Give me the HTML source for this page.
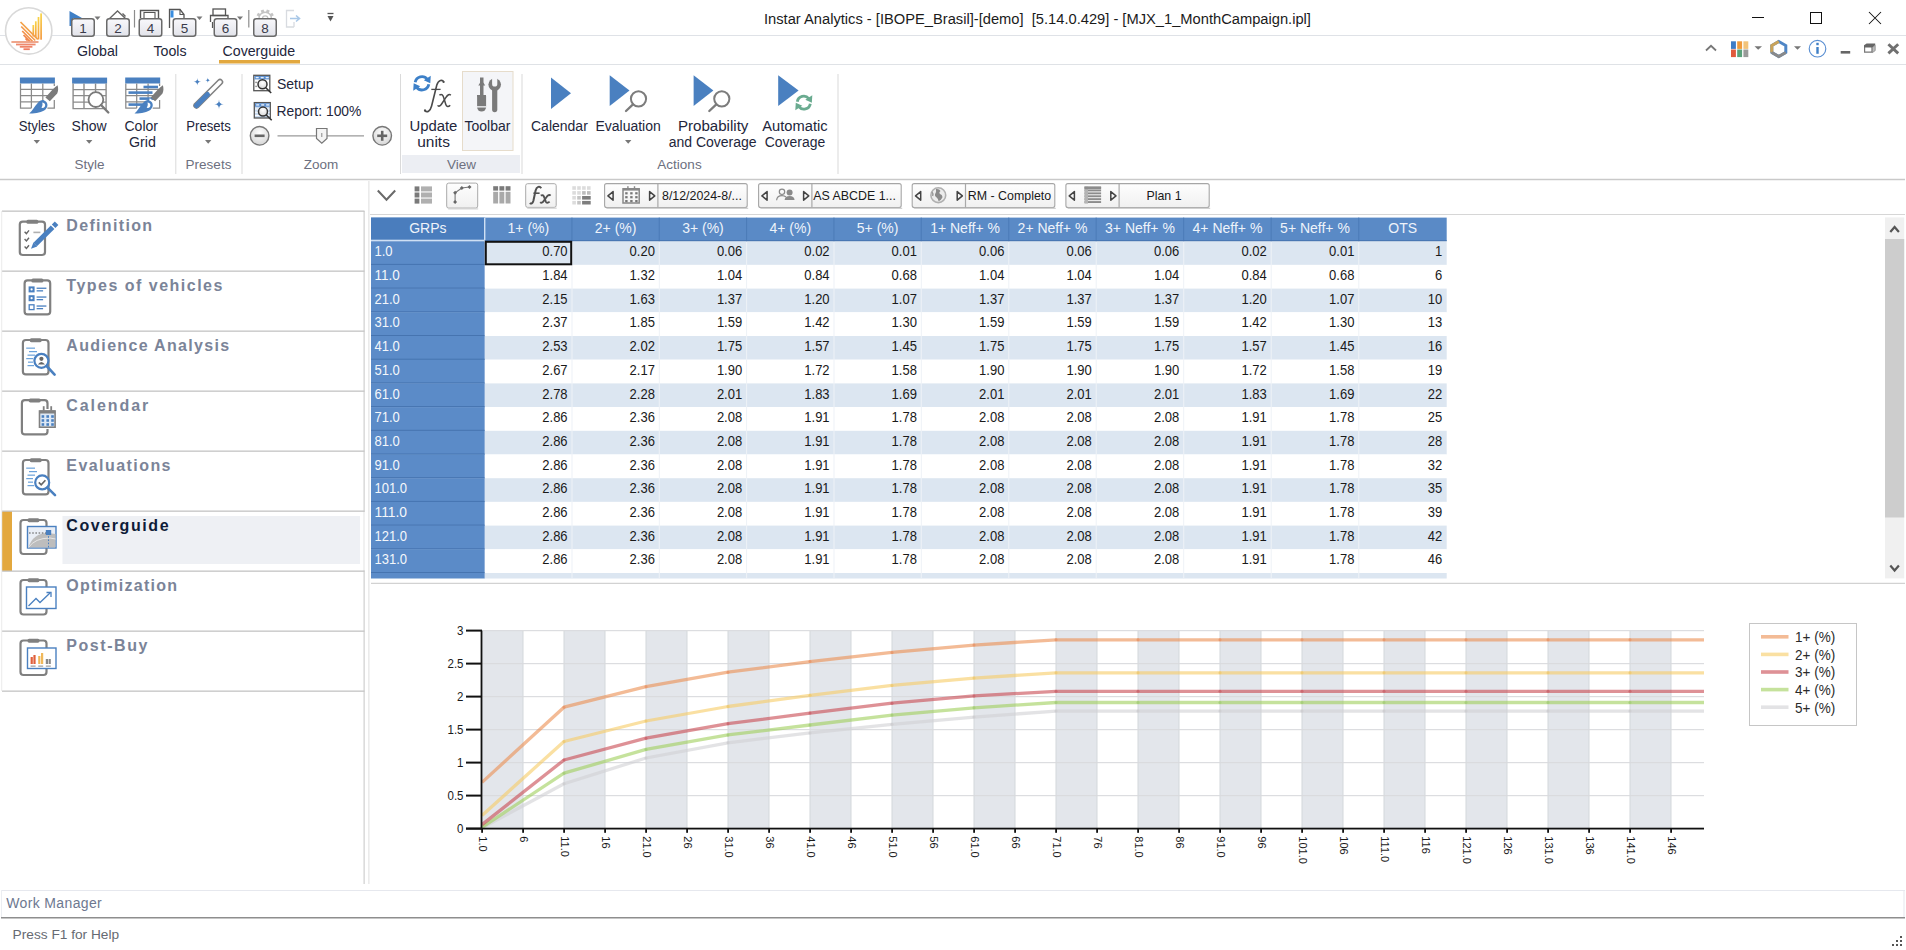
<!DOCTYPE html>
<html><head><meta charset="utf-8"><title>Instar Analytics</title>
<style>
*{margin:0;padding:0;box-sizing:border-box}
html,body{width:1906px;height:950px;overflow:hidden;background:#fff}
body{position:relative;font-family:"Liberation Sans",sans-serif;color:#222}
.a{position:absolute}
.t{position:absolute;white-space:nowrap;line-height:1}
.rl{position:absolute;white-space:nowrap;line-height:1;font-size:14px;color:#262a40}
.gl{position:absolute;white-space:nowrap;line-height:1;font-size:13.5px;color:#6e7180}
.sep{position:absolute;width:1px;background:#d6d6d6}
.badge{position:absolute;width:24px;height:19px;border:1.5px solid #6a6a6a;border-radius:3px;background:linear-gradient(#f7f7fa,#e4e5ec);font-size:14px;line-height:16px;text-align:center;color:#3a3a4a}
.dd{position:absolute;width:0;height:0;border-left:3.5px solid transparent;border-right:3.5px solid transparent;border-top:4px solid #6b6b6b}
.nav{position:absolute;left:2px;width:363px;height:61px;border-top:1.5px solid #c4c4c4;border-right:1px solid #c8c8c8}
.nl{position:absolute;left:66px;top:7px;font-size:16px;font-weight:bold;letter-spacing:1.3px;color:#7b8498;white-space:nowrap;line-height:1}
.cmb{position:absolute;height:24px;border:1px solid #c6c6c6;border-radius:2px;background:linear-gradient(#fdfdfd,#f1f1f1);box-shadow:1px 1px 1px #d8d8d8}
.cell{position:absolute;font-size:13px;line-height:1;white-space:nowrap;color:#1a1a1a}
</style></head><body>
<svg width="1906" height="950" viewBox="0 0 1906 950" style="position:absolute;left:0;top:0;font-family:'Liberation Sans',sans-serif"><defs>
<linearGradient id="bg1" x1="0" y1="0" x2="0" y2="1"><stop offset="0" stop-color="#f8f8fb"/><stop offset="1" stop-color="#e2e3ea"/></linearGradient>
<linearGradient id="btn" x1="0" y1="0" x2="0" y2="1"><stop offset="0" stop-color="#fefefe"/><stop offset="1" stop-color="#f0f0f0"/></linearGradient>
<radialGradient id="zc" cx="0.5" cy="0.35" r="0.6"><stop offset="0" stop-color="#ffffff"/><stop offset="1" stop-color="#d9d9d9"/></radialGradient>
</defs><line x1="0" y1="35.5" x2="1906" y2="35.5" stroke="#dfe2e7" stroke-width="1" />
<circle cx="28.7" cy="30.9" r="23.2" fill="#fff" stroke="#d9d9d9" stroke-width="1.6"/>
<linearGradient id="lg1" x1="0" y1="0" x2="0" y2="1"><stop offset="0" stop-color="#f8d23c"/><stop offset="1" stop-color="#f39236"/></linearGradient>
<rect x="40.25" y="13.4" width="1.7" height="26.300000000000004" fill="url(#lg1)" opacity="0.95"/>
<rect x="37.65" y="17" width="1.7" height="22.5" fill="url(#lg1)" opacity="0.95"/>
<rect x="34.949999999999996" y="21.3" width="1.7" height="16.7" fill="url(#lg1)" opacity="0.95"/>
<rect x="32.449999999999996" y="25" width="1.7" height="11.5" fill="url(#lg1)" opacity="0.95"/>
<line x1="20.5" y1="22" x2="37.8" y2="39.3" stroke="#f4a24a" stroke-width="1.7" />
<line x1="21.2" y1="26.5" x2="35.2" y2="40.5" stroke="#f39a4a" stroke-width="1.7" />
<line x1="22.2" y1="31" x2="32.5" y2="41.3" stroke="#f2924c" stroke-width="1.7" />
<line x1="23.5" y1="35" x2="29.8" y2="41.3" stroke="#f18a4e" stroke-width="1.7" />
<line x1="25.5" y1="38.5" x2="27.6" y2="40.6" stroke="#f08450" stroke-width="1.7" />
<line x1="11.4" y1="42" x2="38.5" y2="42" stroke="#ee9c7e" stroke-width="1.8" />
<line x1="16" y1="44.5" x2="35.6" y2="44.5" stroke="#ee8a6e" stroke-width="1.8" />
<line x1="19.8" y1="46.8" x2="32.4" y2="46.8" stroke="#ef8468" stroke-width="1.8" />
<line x1="23.5" y1="49.2" x2="29.8" y2="49.2" stroke="#ef7d62" stroke-width="1.8" />
<path d="M69.5 11 L82 18 L73 18 L73 26 L69.5 26 Z" fill="#3f7fc6"/>
<path d="M108 20 L117.5 11 L126 19" fill="none" stroke="#666" stroke-width="1.3"/>
<path d="M122.5 13.5 l3 3" stroke="#666" stroke-width="1.5"/>
<line x1="134.5" y1="10" x2="134.5" y2="27.5" stroke="#8c8c8c" stroke-width="1.2" />
<path d="M140.5 18 V10.5 H158.5 V18" fill="none" stroke="#555" stroke-width="1.4"/>
<path d="M144 18 V12.5 H155 V18" fill="none" stroke="#555" stroke-width="1.1"/>
<path d="M169.5 28 V9.5 H180 L184 14.5 V18" fill="none" stroke="#555" stroke-width="1.3"/>
<path d="M180 9.5 V14.5 H184" fill="none" stroke="#555" stroke-width="1.1"/>
<rect x="170.5" y="10.5" width="3" height="7" fill="#3a8ee0"/>
<path d="M210.5 22 V15.5 H228 V18" fill="none" stroke="#555" stroke-width="1.3"/>
<rect x="213" y="9" width="12.5" height="6.5" fill="none" stroke="#555" stroke-width="1.3"/>
<path d="M212.5 22 V28" stroke="#555" stroke-width="1.2"/>
<line x1="248.8" y1="10" x2="248.8" y2="27.5" stroke="#8c8c8c" stroke-width="1.2" />
<path d="M259 18.5 A6.2 6.2 0 0 1 271.4 18.5" fill="none" stroke="#c4c4c4" stroke-width="1.4"/>
<rect x="257.12" y="13.20" width="3" height="3" fill="#c4c4c4" transform="rotate(-60 258.62 14.70)"/>
<rect x="261.10" y="9.86" width="3" height="3" fill="#c4c4c4" transform="rotate(-20 262.60 11.36)"/>
<rect x="266.30" y="9.86" width="3" height="3" fill="#c4c4c4" transform="rotate(20 267.80 11.36)"/>
<rect x="270.28" y="13.20" width="3" height="3" fill="#c4c4c4" transform="rotate(60 271.78 14.70)"/>
<path d="M262.5 18.5 A2.7 2.7 0 0 1 267.9 18.5" fill="none" stroke="#c4c4c4" stroke-width="1.3"/>
<path d="M294 10.5 H286.5 V27 H294 M294 22 V27" fill="none" stroke="#d8dbe0" stroke-width="1.3"/>
<path d="M290 18.5 H299 M296 15.5 L299.5 18.5 L296 21.5" fill="none" stroke="#a9c8e8" stroke-width="1.6"/>
<path d="M327.5 13.5 H333.5" stroke="#555" stroke-width="1.3"/>
<path d="M327.5 16 H333.5 L330.5 21.5 Z" fill="#555"/>
<rect x="71.75" y="18.75" width="22.5" height="17.5" rx="2.5" fill="url(#bg1)" stroke="#6a6a6a" stroke-width="1.5"/>
<text x="83" y="33" font-size="13.5" fill="#3a3b4a" text-anchor="middle" font-weight="normal" >1</text>
<rect x="106.75" y="18.75" width="22.5" height="17.5" rx="2.5" fill="url(#bg1)" stroke="#6a6a6a" stroke-width="1.5"/>
<text x="118" y="33" font-size="13.5" fill="#3a3b4a" text-anchor="middle" font-weight="normal" >2</text>
<rect x="139.25" y="18.75" width="22.5" height="17.5" rx="2.5" fill="url(#bg1)" stroke="#6a6a6a" stroke-width="1.5"/>
<text x="150.5" y="33" font-size="13.5" fill="#3a3b4a" text-anchor="middle" font-weight="normal" >4</text>
<rect x="173.25" y="18.75" width="22.5" height="17.5" rx="2.5" fill="url(#bg1)" stroke="#6a6a6a" stroke-width="1.5"/>
<text x="184.5" y="33" font-size="13.5" fill="#3a3b4a" text-anchor="middle" font-weight="normal" >5</text>
<rect x="214.25" y="18.75" width="22.5" height="17.5" rx="2.5" fill="url(#bg1)" stroke="#6a6a6a" stroke-width="1.5"/>
<text x="225.5" y="33" font-size="13.5" fill="#3a3b4a" text-anchor="middle" font-weight="normal" >6</text>
<rect x="253.75" y="18.75" width="22.5" height="17.5" rx="2.5" fill="url(#bg1)" stroke="#6a6a6a" stroke-width="1.5"/>
<text x="265" y="33" font-size="13.5" fill="#3a3b4a" text-anchor="middle" font-weight="normal" >8</text>
<path d="M94.5 16.5 H100.5 L97.5 20 Z" fill="#777"/>
<path d="M196.5 16.5 H202.5 L199.5 20 Z" fill="#777"/>
<path d="M237 16.5 H243 L240 20 Z" fill="#777"/>
<text x="764" y="24" font-size="14.7" fill="#1b1b1b" text-anchor="start" font-weight="normal" id="title" xml:space="preserve">Instar Analytics - [IBOPE_Brasil]-[demo]  [5.14.0.429] - [MJX_1_MonthCampaign.ipl]</text>
<line x1="1752" y1="17.5" x2="1764" y2="17.5" stroke="#111" stroke-width="1" />
<rect x="1810.5" y="12.5" width="11" height="11" fill="none" stroke="#111" stroke-width="1"/>
<path d="M1869 12 L1881 24 M1881 12 L1869 24" stroke="#111" stroke-width="1.05"/>
<line x1="0" y1="64.5" x2="1906" y2="64.5" stroke="#dfe2e6" stroke-width="1" />
<text x="77" y="55.5" font-size="14.2" fill="#23263b" text-anchor="start" font-weight="normal" >Global</text>
<text x="153.5" y="55.5" font-size="14.2" fill="#23263b" text-anchor="start" font-weight="normal" >Tools</text>
<text x="222.5" y="55.5" font-size="14.2" fill="#23263b" text-anchor="start" font-weight="normal" id="tabcg">Coverguide</text>
<rect x="219" y="60" width="81" height="3.5" fill="#e2a83f" />
<path d="M1706 50.5 L1711 45.8 L1716 50.5" fill="none" stroke="#777" stroke-width="1.8"/>
<rect x="1731.0" y="41.3" width="4.9" height="7.6" fill="#3e7cc5" />
<rect x="1737.2" y="41.3" width="4.9" height="7.6" fill="#f09a3a" />
<rect x="1743.4" y="41.3" width="4.9" height="7.6" fill="#f2c37a" />
<rect x="1731.0" y="49.5" width="4.9" height="7.6" fill="#e05a3c" />
<rect x="1737.2" y="49.5" width="4.9" height="7.6" fill="#5aa27a" />
<rect x="1743.4" y="49.5" width="4.9" height="7.6" fill="#9a9a9a" />
<path d="M1754.5 46.2 H1762 L1758.2 49.8 Z" fill="#777"/>
<path d="M1778.8 41.5 L1785.8 45.5 L1785.8 52.5 L1778.8 56.5 L1771.8 52.5 L1771.8 45.5 Z" fill="none" stroke="#4f86c6" stroke-width="3"/>
<path d="M1771.8 52.5 L1771.8 45.5 L1778.8 41.5" fill="none" stroke="#c9a35a" stroke-width="3"/>
<path d="M1771.8 52.5 L1778.8 56.5 L1785.8 52.5" fill="none" stroke="#8a8a8a" stroke-width="3"/>
<path d="M1794 46.2 H1801 L1797.5 49.8 Z" fill="#777"/>
<circle cx="1817.5" cy="48.7" r="8.3" fill="none" stroke="#5a8fd2" stroke-width="1.15"/>
<rect x="1816.3" y="47" width="2.4" height="6.8" fill="#3f7fc6" />
<rect x="1816.3" y="42.8" width="2.4" height="2.4" fill="#3f7fc6" />
<rect x="1840.7" y="51" width="9.5" height="2.6" fill="#666" />
<path d="M1864.6 46.5 H1872 V52.2 H1864.6 Z" fill="#fff" stroke="#777" stroke-width="1.2"/>
<path d="M1864 47.6 V45.2 L1866.6 43.6 H1875.2 V45.2 L1872.4 47.6 Z" fill="#666"/>
<path d="M1872.4 47.6 L1875.2 45.2 V50.6 L1872.4 52.6 Z" fill="#bdbdbd" stroke="#888" stroke-width="0.8"/>
<path d="M1888.4 44.2 L1898.2 53.4 M1898.2 44.2 L1888.4 53.4" stroke="#707070" stroke-width="2.9"/>
<rect x="19.9" y="77.5" width="35" height="6" fill="#4a80c0" />
<path d="M20.5 83.5 V108 H31.5 M54.3 83.5 V86 M54.3 100 V108 H47.4 M31.4 83.5 V108 M42.8 83.5 V104 M20.5 89.3 H54 M20.5 95.5 H50 M20.5 101.8 H40" fill="none" stroke="#8a8a8a" stroke-width="1.25"/>
<path d="M 57.60,85.20 C 58.40,88.00 58.40,91.00 57.20,93.50 L 49.80,101.20 L 45.40,97.60 L 52.60,89.60 C 54.00,88.00 56.00,86.50 57.60,85.20 Z" fill="#7b7b7b"/>
<path d="M 44.20,98.80 L 49.00,102.80" stroke="#fff" stroke-width="1.3"/>
<path d="M 43.80,100.20 C 47.50,101.80 49.00,105.50 45.50,109.50 C 42.00,112.50 35.00,113.80 29.20,113.60 C 32.50,110.50 34.50,106.50 37.50,103.20 C 39.50,101.00 41.60,99.80 43.80,100.20 Z" fill="#4a80c0"/>
<path d="M 42.20,102.60 C 44.80,103.00 46.00,105.00 44.60,107.00 C 43.60,108.20 42.00,108.40 41.40,107.60 C 42.80,106.00 42.60,104.00 42.20,102.60 Z" fill="#fff"/>
<rect x="72.1" y="77.6" width="35" height="6" fill="#4a80c0" />
<path d="M73.1 83.6 V108.6 H106.1 V83.6 M84.0 83.6 V108.6 M95.55 83.6 V108.6 M73.1 89.6 H106.1 M73.1 95.6 H106.1 M73.1 102.1 H106.1" fill="none" stroke="#8c8c8c" stroke-width="1.4"/>
<circle cx="95.9" cy="99.6" r="7.4" fill="#fff" stroke="#7a7a7a" stroke-width="1.8"/>
<path d="M101 105 L108.3 112.5" stroke="#7a7a7a" stroke-width="2.4" stroke-linecap="round"/>
<rect x="125.2" y="77.5" width="35" height="6" fill="#4a80c0" />
<path d="M125.8 83.5 V108 H136.8 M159.6 83.5 V86 M159.6 100 V108 H152.7 M136.7 83.5 V108 M148.1 83.5 V104 M125.8 89.3 H159 M125.8 95.5 H155 M125.8 101.8 H145" fill="none" stroke="#8a8a8a" stroke-width="1.25"/>
<rect x="143.5" y="85.7" width="14.5" height="2.6" fill="#4a80c0" />
<rect x="128.5" y="91.3" width="24.0" height="2.6" fill="#4a80c0" />
<rect x="139.5" y="97.3" width="15.5" height="2.6" fill="#4a80c0" />
<rect x="128.5" y="103.3" width="17.5" height="2.6" fill="#4a80c0" />
<path d="M 162.90,85.20 C 163.70,88.00 163.70,91.00 162.50,93.50 L 155.10,101.20 L 150.70,97.60 L 157.90,89.60 C 159.30,88.00 161.30,86.50 162.90,85.20 Z" fill="#7b7b7b"/>
<path d="M 149.50,98.80 L 154.30,102.80" stroke="#fff" stroke-width="1.3"/>
<path d="M 149.10,100.20 C 152.80,101.80 154.30,105.50 150.80,109.50 C 147.30,112.50 140.30,113.80 134.50,113.60 C 137.80,110.50 139.80,106.50 142.80,103.20 C 144.80,101.00 146.90,99.80 149.10,100.20 Z" fill="#4a80c0"/>
<path d="M 147.50,102.60 C 150.10,103.00 151.30,105.00 149.90,107.00 C 148.90,108.20 147.30,108.40 146.70,107.60 C 148.10,106.00 147.90,104.00 147.50,102.60 Z" fill="#fff"/>
<text x="18.8" y="131" font-size="14" fill="#23263b" text-anchor="start" font-weight="normal"  textLength="36" lengthAdjust="spacingAndGlyphs">Styles</text>
<text x="71.6" y="131" font-size="14" fill="#23263b" text-anchor="start" font-weight="normal" >Show</text>
<text x="124.5" y="131" font-size="14" fill="#23263b" text-anchor="start" font-weight="normal" >Color</text>
<text x="129" y="147" font-size="14" fill="#23263b" text-anchor="start" font-weight="normal"  textLength="26.9" lengthAdjust="spacingAndGlyphs">Grid</text>
<path d="M33.6 140 H40 L36.8 143.7 Z" fill="#777"/>
<path d="M86 140 H92.4 L89.2 143.7 Z" fill="#777"/>
<text x="89.5" y="168.5" font-size="13.5" fill="#6d7080" text-anchor="middle" font-weight="normal" >Style</text>
<rect x="175.3" y="74" width="1" height="100" fill="#dadada"/>
<path d="M196.5 105.5 L220 82" stroke="#808080" stroke-width="6.5" stroke-linecap="round"/>
<path d="M196.5 105.5 L220 82" stroke="#fff" stroke-width="3.5" stroke-linecap="round"/>
<path d="M196.5 105.5 L207.5 94.5" stroke="#4a80c0" stroke-width="5" stroke-linecap="round"/>
<path d="M197.3 78.0 Q197.3 81.8 201.10000000000002 81.8 Q197.3 81.8 197.3 85.6 Q197.3 81.8 193.5 81.8 Q197.3 81.8 197.3 78.0 Z" fill="#4a80c0"/>
<path d="M207.8 77.4 Q207.8 80.2 210.60000000000002 80.2 Q207.8 80.2 207.8 83.0 Q207.8 80.2 205.0 80.2 Q207.8 80.2 207.8 77.4 Z" fill="#4a80c0"/>
<path d="M219 99.4 Q219 104.2 223.8 104.2 Q219 104.2 219 109.0 Q219 104.2 214.2 104.2 Q219 104.2 219 99.4 Z" fill="#4a80c0"/>
<text x="186.3" y="131" font-size="14" fill="#23263b" text-anchor="start" font-weight="normal"  textLength="44.5" lengthAdjust="spacingAndGlyphs">Presets</text>
<path d="M205 140 H211.4 L208.2 143.7 Z" fill="#777"/>
<text x="208.5" y="168.5" font-size="13.5" fill="#6d7080" text-anchor="middle" font-weight="normal" >Presets</text>
<rect x="241.5" y="74" width="1" height="100" fill="#dadada"/>
<rect x="253.79999999999998" y="75.3" width="16" height="15.4" fill="#fff" stroke="#555" stroke-width="1.3"/>
<rect x="254.5" y="76.0" width="14.6" height="3.4" fill="#5b8fd0" />
<rect x="255.7" y="76.9" width="3" height="1.4" fill="#e8f0fa" />
<rect x="260.7" y="76.9" width="3" height="1.4" fill="#e8f0fa" />
<rect x="265.7" y="76.9" width="3" height="1.4" fill="#e8f0fa" />
<rect x="255.2" y="81.7" width="2" height="1.4" fill="#999" />
<rect x="255.2" y="85.7" width="2" height="1.4" fill="#999" />
<circle cx="262.5" cy="84.3" r="4.5" fill="url(#zc)" stroke="#333" stroke-width="1.5"/>
<path d="M265.8 87.7 L271.2 93.0" stroke="#333" stroke-width="1.6"/>
<rect x="254.29999999999998" y="102.6" width="16" height="15.4" fill="#c9dbf0" stroke="#555" stroke-width="1.3"/>
<rect x="255.0" y="103.3" width="14.6" height="3.4" fill="#5b8fd0" />
<rect x="256.2" y="104.2" width="3" height="1.4" fill="#e8f0fa" />
<rect x="261.2" y="104.2" width="3" height="1.4" fill="#e8f0fa" />
<rect x="266.2" y="104.2" width="3" height="1.4" fill="#e8f0fa" />
<rect x="255.0" y="108.5" width="14.6" height="1" fill="#ffffff" />
<rect x="255.0" y="111.7" width="14.6" height="1" fill="#ffffff" />
<rect x="255.0" y="114.9" width="14.6" height="1" fill="#ffffff" />
<circle cx="263.0" cy="111.6" r="4.5" fill="url(#zc)" stroke="#333" stroke-width="1.5"/>
<path d="M266.3 115 L271.7 120.3" stroke="#333" stroke-width="1.6"/>
<text x="277" y="88.5" font-size="14" fill="#23263b" text-anchor="start" font-weight="normal" >Setup</text>
<text x="276.6" y="116.2" font-size="14" fill="#23263b" text-anchor="start" font-weight="normal"  textLength="84.8" lengthAdjust="spacingAndGlyphs">Report: 100%</text>
<circle cx="259.6" cy="135.8" r="9.3" fill="url(#zc)" stroke="#777" stroke-width="1.4"/>
<path d="M254.60000000000002 135.8 H264.6" stroke="#666" stroke-width="2.6"/>
<circle cx="382.2" cy="135.8" r="9.3" fill="url(#zc)" stroke="#777" stroke-width="1.4"/>
<path d="M377.2 135.8 H387.2" stroke="#666" stroke-width="2.6"/>
<path d="M382.2 130.8 V140.8" stroke="#666" stroke-width="2.6"/>
<line x1="277.5" y1="135.8" x2="364" y2="135.8" stroke="#9a9a9a" stroke-width="1.2" />
<path d="M316.5 128.5 H327 V138.5 L321.8 143.3 L316.5 138.5 Z" fill="#f4f4f4" stroke="#777" stroke-width="1.2"/>
<line x1="321.8" y1="133" x2="321.8" y2="137" stroke="#888" stroke-width="1" />
<text x="321" y="168.5" font-size="13.5" fill="#6d7080" text-anchor="middle" font-weight="normal" >Zoom</text>
<rect x="400" y="74" width="1" height="100" fill="#dadada"/>
<rect x="402" y="155" width="118" height="18" fill="#eceef3" />
<rect x="462.5" y="71.5" width="50.5" height="79" fill="#f4f5f8" stroke="#e6dccb" stroke-width="1"/>
<path d="M415.2 82.3 A6.8 6.8 0 0 1 427.3 79.3" fill="none" stroke="#3d80c8" stroke-width="2.8"/>
<path d="M430.8 75.8 L430.3 83.3 L423.8 80.3 Z" fill="#3d80c8"/>
<path d="M428.8 84.3 A6.8 6.8 0 0 1 416.7 87.3" fill="none" stroke="#3d80c8" stroke-width="2.8"/>
<path d="M413.2 90.8 L413.7 83.3 L420.2 86.3 Z" fill="#3d80c8"/>
<path d="M443.8 81.8 C442.5 79.5 438.5 79.5 436.8 85 L431.6 106 C430.2 111.5 427 112.8 424.8 110.6" fill="none" stroke="#4a4a4a" stroke-width="1.6"/>
<circle cx="443.6" cy="82" r="1.1" fill="#4a4a4a"/><circle cx="425" cy="110.4" r="1.1" fill="#4a4a4a"/>
<path d="M431.3 89.4 H440.6" stroke="#4a4a4a" stroke-width="1.3"/>
<path d="M439.4 95.2 C441.8 93.6 443 95 444 98.5 L445.8 104.5 C446.6 107 448.4 107.2 450.2 105.2" fill="none" stroke="#4a4a4a" stroke-width="1.5"/>
<path d="M450.8 95.2 C449.4 93.8 447.8 94.6 445.8 97.6 L441.6 104 C440.2 106.2 438.6 106.8 437.6 105.4" fill="none" stroke="#4a4a4a" stroke-width="1.5"/>
<rect x="480" y="77.5" width="3.5" height="18" fill="#7a7a7a" />
<path d="M478.3 85.5 L480 82.8 H483.5 L485.2 85.5 Z" fill="#7a7a7a"/>
<rect x="477" y="95" width="9" height="1.6" fill="#7a7a7a" />
<path d="M477.1 96 H486.1 V107 A4.5 4.5 0 0 1 477.1 107 Z" fill="#7a7a7a"/>
<rect x="477" y="106.2" width="9.2" height="1.3" fill="#f4f5f8" />
<circle cx="494.7" cy="84.6" r="6.3" fill="#7a7a7a"/>
<path d="M492.1 77 H497.3 V84 A2.6 2.6 0 0 1 492.1 84 Z" fill="#f4f5f8"/>
<path d="M492.1 88 H497.3 V109.6 A2.6 2.6 0 0 1 492.1 109.6 Z" fill="#7a7a7a"/>
<text x="409.4" y="131" font-size="14" fill="#23263b" text-anchor="start" font-weight="normal"  textLength="48" lengthAdjust="spacingAndGlyphs">Update</text>
<text x="417.2" y="147" font-size="14" fill="#23263b" text-anchor="start" font-weight="normal"  textLength="32.7" lengthAdjust="spacingAndGlyphs">units</text>
<text x="464.5" y="131" font-size="14" fill="#23263b" text-anchor="start" font-weight="normal" >Toolbar</text>
<text x="461.5" y="168.5" font-size="13.5" fill="#6d7080" text-anchor="middle" font-weight="normal" >View</text>
<rect x="521.5" y="74" width="1" height="100" fill="#dadada"/>
<path d="M551 77.5 L571 93.2 L551 109 Z" fill="#4a80c0"/>
<path d="M609.7 75.2 L629.5 90.6 L609.7 106 Z" fill="#4a80c0"/>
<circle cx="638.5" cy="98.8" r="7.6" fill="#fff" stroke="#7c7c7c" stroke-width="2"/>
<path d="M633.0 104.3 L626.0 111" stroke="#7c7c7c" stroke-width="2.3" stroke-linecap="round"/>
<path d="M693.6 75.2 L713.4 90.6 L693.6 106 Z" fill="#4a80c0"/>
<circle cx="721.8" cy="98.8" r="7.6" fill="#fff" stroke="#7c7c7c" stroke-width="2"/>
<path d="M716.3 104.3 L709.3 111" stroke="#7c7c7c" stroke-width="2.3" stroke-linecap="round"/>
<path d="M778.2 75.2 L798.6 90.6 L778.2 106 Z" fill="#4a80c0"/>
<path d="M797.3 101.7 A6.5 6.5 0 0 1 808.8 98.7" fill="none" stroke="#6aab90" stroke-width="2.8"/>
<path d="M812.3 95.2 L811.8 102.7 L805.3 99.7 Z" fill="#6aab90"/>
<path d="M810.3 103.7 A6.5 6.5 0 0 1 798.8 106.7" fill="none" stroke="#6aab90" stroke-width="2.8"/>
<path d="M795.3 110.2 L795.8 102.7 L802.3 105.7 Z" fill="#6aab90"/>
<text x="531" y="131" font-size="14" fill="#23263b" text-anchor="start" font-weight="normal" >Calendar</text>
<text x="595.4" y="131" font-size="14" fill="#23263b" text-anchor="start" font-weight="normal" >Evaluation</text>
<path d="M625 140 H631.4 L628.2 143.7 Z" fill="#777"/>
<text x="677.9" y="131" font-size="14" fill="#23263b" text-anchor="start" font-weight="normal"  textLength="70.5" lengthAdjust="spacingAndGlyphs">Probability</text>
<text x="668.7" y="147" font-size="14" fill="#23263b" text-anchor="start" font-weight="normal" >and Coverage</text>
<text x="762.3" y="131" font-size="14" fill="#23263b" text-anchor="start" font-weight="normal"  textLength="65.3" lengthAdjust="spacingAndGlyphs">Automatic</text>
<text x="764.8" y="147" font-size="14" fill="#23263b" text-anchor="start" font-weight="normal"  textLength="60.4" lengthAdjust="spacingAndGlyphs">Coverage</text>
<text x="679.5" y="168.5" font-size="13.5" fill="#6d7080" text-anchor="middle" font-weight="normal" >Actions</text>
<rect x="837.5" y="74" width="1" height="100" fill="#dadada"/>
<line x1="0" y1="179.5" x2="1905" y2="179.5" stroke="#c9c9c9" stroke-width="1.5" />
<rect x="363.6" y="211" width="1" height="673" fill="#c6c6c6" />
<rect x="368.4" y="181" width="1" height="703" fill="#dedede" />
<rect x="2" y="511" width="10" height="60" fill="#e3a83e" />
<rect x="62.5" y="516" width="297.5" height="48" fill="#eef0f4" />
<rect x="363.6" y="512" width="1" height="58.5" fill="#fff" />
<rect x="2" y="210.5" width="362.5" height="1.3" fill="#c4c4c4" />
<rect x="2" y="270.5" width="362.5" height="1.3" fill="#c4c4c4" />
<rect x="2" y="330.5" width="362.5" height="1.3" fill="#c4c4c4" />
<rect x="2" y="390.5" width="362.5" height="1.3" fill="#c4c4c4" />
<rect x="2" y="450.5" width="362.5" height="1.3" fill="#c4c4c4" />
<rect x="2" y="510.5" width="362.5" height="1.3" fill="#c4c4c4" />
<rect x="2" y="570.5" width="362.5" height="1.3" fill="#c4c4c4" />
<rect x="2" y="630.5" width="362.5" height="1.3" fill="#c4c4c4" />
<rect x="2" y="690.5" width="362.5" height="1.3" fill="#c4c4c4" />
<rect x="1.2" y="211" width="1" height="480" fill="#ececec" />
<text x="66.3" y="231" font-size="16" font-weight="bold" textLength="85.8" lengthAdjust="spacing" fill="#7b8498">Definition</text>
<text x="66.3" y="291" font-size="16" font-weight="bold" textLength="156.1" lengthAdjust="spacing" fill="#7b8498">Types of vehicles</text>
<text x="66.3" y="351" font-size="16" font-weight="bold" textLength="162.8" lengthAdjust="spacing" fill="#7b8498">Audience Analysis</text>
<text x="66.3" y="411" font-size="16" font-weight="bold" textLength="82.0" lengthAdjust="spacing" fill="#7b8498">Calendar</text>
<text x="66.3" y="471" font-size="16" font-weight="bold" textLength="104.2" lengthAdjust="spacing" fill="#7b8498">Evaluations</text>
<text x="66.3" y="531" font-size="16" font-weight="bold" textLength="102.3" lengthAdjust="spacing" fill="#0f1c38">Coverguide</text>
<text x="66.3" y="591" font-size="16" font-weight="bold" textLength="110.8" lengthAdjust="spacing" fill="#7b8498">Optimization</text>
<text x="66.3" y="651" font-size="16" font-weight="bold" textLength="81.1" lengthAdjust="spacing" fill="#7b8498">Post-Buy</text>
<rect x="19.8" y="221.6" width="25.2" height="33.4" rx="3" fill="#fff" stroke="#808080" stroke-width="2.2"/>
<rect x="26.4" y="219.79999999999998" width="12" height="4" rx="1.6" fill="#808080"/>
<path d="M24.6 231.8 l1.8 1.8 l2.6 -3.2" fill="none" stroke="#666" stroke-width="1.4"/>
<path d="M24.6 239.1 l1.8 1.8 l2.6 -3.2" fill="none" stroke="#666" stroke-width="1.4"/>
<path d="M24.6 246.6 l1.8 1.8 l2.6 -3.2" fill="none" stroke="#666" stroke-width="1.4"/>
<rect x="33.4" y="231.6" width="7" height="1.6" fill="#b0b0b0" />
<path d="M35.2 244.6 L52.6 227.2" stroke="#4a80c0" stroke-width="5"/>
<path d="M53.6 226.2 L56.6 223.2" stroke="#4a80c0" stroke-width="5"/>
<path d="M33.4 242.6 L37.2 246.4 L31 248.8 Z" fill="#4a80c0"/>
<rect x="24.6" y="280.4" width="25.6" height="34" rx="3" fill="#fff" stroke="#808080" stroke-width="2.2"/>
<rect x="31.400000000000006" y="278.59999999999997" width="12" height="4" rx="1.6" fill="#808080"/>
<rect x="28.6" y="286.4" width="6" height="6" fill="#4a80c0" />
<circle cx="31.6" cy="289.4" r="1.1" fill="#fff"/>
<rect x="36.6" y="287.59999999999997" width="9.8" height="1.3" fill="#4a80c0" />
<rect x="36.6" y="290.2" width="6.5" height="1.3" fill="#4a80c0" />
<rect x="28.6" y="295.2" width="6" height="6" fill="#4a80c0" />
<circle cx="31.6" cy="298.2" r="1.1" fill="#fff"/>
<rect x="36.6" y="296.4" width="9.8" height="1.3" fill="#4a80c0" />
<rect x="36.6" y="299.0" width="6.5" height="1.3" fill="#4a80c0" />
<rect x="29.2" y="304.8" width="4.8" height="4.8" fill="none" stroke="#4a80c0" stroke-width="1.3"/>
<rect x="36.6" y="305.4" width="9.8" height="1.3" fill="#4a80c0" />
<rect x="36.6" y="308.0" width="6.5" height="1.3" fill="#4a80c0" />
<rect x="22.9" y="340" width="25.6" height="34.4" rx="3" fill="#fff" stroke="#808080" stroke-width="2.2"/>
<rect x="29.700000000000003" y="338.2" width="12" height="4" rx="1.6" fill="#808080"/>
<rect x="26.2" y="347.6" width="8.8" height="1.1" fill="#5d9ad8" />
<rect x="29" y="351.1" width="8" height="1.1" fill="#5d9ad8" />
<rect x="27.5" y="354.6" width="7.5" height="1.1" fill="#5d9ad8" />
<rect x="26.2" y="358.1" width="6.800000000000001" height="1.1" fill="#5d9ad8" />
<rect x="28" y="361.6" width="5" height="1.1" fill="#5d9ad8" />
<rect x="27.5" y="365.1" width="6.5" height="1.1" fill="#5d9ad8" />
<circle cx="41.4" cy="360.8" r="7" fill="#fff" stroke="#4a80c0" stroke-width="2.2"/>
<circle cx="41.4" cy="358.8" r="2.1" fill="#666"/><path d="M37.8 364.6 Q41.4 359.6 45 364.6 Z" fill="#666"/>
<path d="M46.6 366 L54.6 374.6" stroke="#4a80c0" stroke-width="2.6" stroke-linecap="round"/>
<rect x="21.9" y="400.2" width="25.6" height="34.2" rx="3" fill="#fff" stroke="#808080" stroke-width="2.2"/>
<rect x="28.700000000000003" y="398.4" width="12" height="4" rx="1.6" fill="#808080"/>
<rect x="37.5" y="409" width="19.5" height="20" fill="#fff" />
<rect x="39.5" y="411" width="15.6" height="16.2" fill="#dde8f5" stroke="#808080" stroke-width="1.6"/>
<rect x="39.5" y="410.5" width="15.6" height="3" fill="#808080" />
<rect x="41.6" y="415.2" width="2.6" height="2.6" fill="#4a80c0" />
<rect x="46.4" y="415.2" width="2.6" height="2.6" fill="#4a80c0" />
<rect x="51.2" y="415.2" width="2.6" height="2.6" fill="#4a80c0" />
<rect x="41.6" y="419.2" width="2.6" height="2.6" fill="#4a80c0" />
<rect x="46.4" y="419.2" width="2.6" height="2.6" fill="#4a80c0" />
<rect x="51.2" y="419.2" width="2.6" height="2.6" fill="#4a80c0" />
<rect x="41.6" y="423.2" width="2.6" height="2.6" fill="#4a80c0" />
<rect x="46.4" y="423.2" width="2.6" height="2.6" fill="#4a80c0" />
<rect x="51.2" y="423.2" width="2.6" height="2.6" fill="#4a80c0" />
<rect x="42.8" y="406.2" width="1.8" height="4.4" fill="#808080" />
<rect x="50.3" y="406.2" width="1.8" height="4.4" fill="#808080" />
<rect x="22.9" y="460" width="25.6" height="34.4" rx="3" fill="#fff" stroke="#808080" stroke-width="2.2"/>
<rect x="29.700000000000003" y="458.2" width="12" height="4" rx="1.6" fill="#808080"/>
<rect x="26.2" y="467.6" width="8.8" height="1.1" fill="#5d9ad8" />
<rect x="29" y="471.1" width="8" height="1.1" fill="#5d9ad8" />
<rect x="27.5" y="474.6" width="7.5" height="1.1" fill="#5d9ad8" />
<rect x="26.2" y="478.1" width="6.800000000000001" height="1.1" fill="#5d9ad8" />
<rect x="28" y="481.6" width="5" height="1.1" fill="#5d9ad8" />
<rect x="27.5" y="485.1" width="6.5" height="1.1" fill="#5d9ad8" />
<circle cx="42.2" cy="482.4" r="7" fill="#fff" stroke="#4a80c0" stroke-width="2.2"/>
<path d="M38.8 482.4 l2.4 2.4 l4.2 -4.6" fill="none" stroke="#666" stroke-width="1.7"/>
<path d="M47.4 487.6 L55 495.2" stroke="#4a80c0" stroke-width="2.6" stroke-linecap="round"/>
<rect x="20.5" y="520" width="26" height="34" rx="3" fill="#fff" stroke="#808080" stroke-width="2.2"/>
<rect x="27.5" y="518.2" width="12" height="4" rx="1.6" fill="#808080"/>
<rect x="27.5" y="526.5" width="28.5" height="21.5" fill="#e9eef6" stroke="#4a80c0" stroke-width="1.4"/>
<path d="M28.5 547.5 Q33 533 48 533 L55.5 534 V547.5 Z" fill="#bdbdbd"/>
<path d="M28.5 547.5 Q35 538 50 538 L55.5 539" fill="none" stroke="#e6e6e6" stroke-width="1"/>
<path d="M29 533 H47" stroke="#555" stroke-width="1" stroke-dasharray="1.6 1.6"/>
<path d="M48.5 533 V548" stroke="#4a80c0" stroke-width="1" stroke-dasharray="1.6 1.6"/>
<rect x="45.8" y="530" width="5.4" height="5" fill="#4a80c0" />
<rect x="20.5" y="580" width="26" height="34.5" rx="3" fill="#fff" stroke="#808080" stroke-width="2.2"/>
<rect x="27.5" y="578.2" width="12" height="4" rx="1.6" fill="#808080"/>
<rect x="26.5" y="587" width="29.5" height="21.5" fill="#fff" stroke="#4a80c0" stroke-width="1.4"/>
<path d="M28.5 606 L36 598.5 L40 602.5 L50 593" fill="none" stroke="#4a80c0" stroke-width="1.3"/>
<path d="M46.5 592.5 H51 V597" fill="none" stroke="#4a80c0" stroke-width="1.3"/>
<rect x="20.5" y="640.5" width="26" height="34.5" rx="3" fill="#fff" stroke="#808080" stroke-width="2.2"/>
<rect x="27.5" y="638.7" width="12" height="4" rx="1.6" fill="#808080"/>
<rect x="27.5" y="648" width="28.5" height="20.5" fill="#fff" stroke="#4a80c0" stroke-width="1.4"/>
<rect x="30.6" y="657" width="2.2" height="7" fill="#e0603c" />
<rect x="33.4" y="655" width="2.2" height="9" fill="#e0603c" />
<rect x="38.2" y="656" width="2.2" height="8" fill="#f0b85a" />
<rect x="41" y="653" width="2.2" height="11" fill="#f0b85a" />
<rect x="45.8" y="659" width="2.2" height="5" fill="#888" />
<rect x="48.6" y="659" width="2.2" height="5" fill="#888" />
<rect x="30.6" y="665.6" width="5" height="1" fill="#888" />
<rect x="38.2" y="665.6" width="5" height="1" fill="#888" />
<rect x="45.8" y="665.6" width="5" height="1" fill="#888" />
<line x1="370" y1="214.5" x2="1905" y2="214.5" stroke="#d6d6d6" stroke-width="1.2" />
<path d="M377.8 190.5 L386.5 199.8 L395.2 190.5" fill="none" stroke="#6a6a6a" stroke-width="2"/>
<rect x="414.6" y="186.4" width="4.8" height="5" fill="#7a7a7a" />
<rect x="421" y="186.4" width="11" height="5" fill="#b0b0b0" />
<rect x="414.6" y="192.5" width="4.8" height="5" fill="#7a7a7a" />
<rect x="421" y="192.5" width="11" height="5" fill="#b0b0b0" />
<rect x="414.6" y="198.6" width="4.8" height="5" fill="#7a7a7a" />
<rect x="421" y="198.6" width="11" height="5" fill="#b0b0b0" />
<rect x="446.7" y="183.1" width="31" height="25" rx="2" fill="url(#btn)" stroke="#a9a9a9" stroke-width="1"/>
<line x1="448.2" y1="208.9" x2="478.2" y2="208.9" stroke="#d4d4d4" stroke-width="1.2" />
<path d="M455.1 202 L455.1 192.8 L461.8 188 L469.5 187" fill="none" stroke="#777" stroke-width="1.1"/>
<rect x="453.70000000000005" y="200.6" width="2.8" height="2.8" fill="#666" transform="rotate(45 455.1 202)"/>
<rect x="453.70000000000005" y="191.4" width="2.8" height="2.8" fill="#666" transform="rotate(45 455.1 192.8)"/>
<rect x="460.40000000000003" y="186.6" width="2.8" height="2.8" fill="#666" transform="rotate(45 461.8 188)"/>
<rect x="468.1" y="185.6" width="2.8" height="2.8" fill="#666" transform="rotate(45 469.5 187)"/>
<rect x="493.2" y="186.2" width="4.9" height="4.4" fill="#7a7a7a" />
<rect x="493.2" y="191.8" width="4.9" height="11.7" fill="#a9a9a9" />
<rect x="499.4" y="186.2" width="4.9" height="4.4" fill="#7a7a7a" />
<rect x="499.4" y="191.8" width="4.9" height="11.7" fill="#a9a9a9" />
<rect x="505.59999999999997" y="186.2" width="4.9" height="4.4" fill="#7a7a7a" />
<rect x="505.59999999999997" y="191.8" width="4.9" height="11.7" fill="#a9a9a9" />
<rect x="525.7" y="183.7" width="30.5" height="23.7" rx="2" fill="url(#btn)" stroke="#a9a9a9" stroke-width="1"/>
<line x1="527.2" y1="208.2" x2="556.7" y2="208.2" stroke="#d4d4d4" stroke-width="1.2" />
<path d="M541.2 188.2 C539.8 185.8 536.6 186.4 535.6 190.6 L533.4 200.8 C532.7 203.6 531 204.2 530 202.8" fill="none" stroke="#505050" stroke-width="2"/>
<path d="M533.4 193.2 H539.6" stroke="#505050" stroke-width="1.6"/>
<path d="M540.8 195.6 C542.6 194.4 543.7 195.4 544.5 198 L545.8 201.6 C546.4 203 547.8 203.2 549.6 201.6" fill="none" stroke="#505050" stroke-width="1.9"/>
<path d="M550.6 195.6 C549.4 194.5 548 195.1 546.4 197.3 L543.4 201.4 C542.4 202.8 541.2 203.2 540.2 202.2" fill="none" stroke="#505050" stroke-width="1.9"/>
<rect x="572.3" y="186.2" width="3.6" height="3.6" fill="#dcdcdc" />
<rect x="577.1999999999999" y="186.2" width="3.6" height="3.6" fill="#dcdcdc" />
<rect x="582.0999999999999" y="186.2" width="3.6" height="3.6" fill="#dcdcdc" />
<rect x="587.0" y="186.2" width="3.6" height="3.6" fill="#dcdcdc" />
<rect x="572.3" y="191.1" width="3.6" height="3.6" fill="#dcdcdc" />
<rect x="577.1999999999999" y="191.1" width="3.6" height="3.6" fill="#dcdcdc" />
<rect x="582.0999999999999" y="191.1" width="3.6" height="3.6" fill="#bdbdbd" />
<rect x="587.0" y="191.1" width="3.6" height="3.6" fill="#bdbdbd" />
<rect x="572.3" y="196.0" width="3.6" height="3.6" fill="#dcdcdc" />
<rect x="577.1999999999999" y="196.0" width="3.6" height="3.6" fill="#c4c4c4" />
<rect x="572.3" y="200.89999999999998" width="3.6" height="3.6" fill="#dcdcdc" />
<rect x="577.1999999999999" y="200.89999999999998" width="3.6" height="3.6" fill="#c4c4c4" />
<rect x="582.1" y="196" width="8.6" height="3.6" fill="#7d7d7d" />
<rect x="582.1" y="200.9" width="8.6" height="3.6" fill="#7d7d7d" />
<rect x="604.6" y="183.6" width="142.60000000000002" height="24" rx="2" fill="url(#btn)" stroke="#a6a6a6" stroke-width="1.1"/>
<line x1="606.6" y1="208.4" x2="748.2" y2="208.4" stroke="#d0d0d0" stroke-width="1.3" />
<rect x="657.3" y="184" width="1.2" height="23.4" fill="#a9a9a9" />
<path d="M613.1 191.6 V200.2 L607.9 195.9 Z" fill="none" stroke="#444" stroke-width="1.5" stroke-linejoin="round"/>
<path d="M649.5999999999999 191.6 V200.2 L654.8 195.9 Z" fill="none" stroke="#444" stroke-width="1.5" stroke-linejoin="round"/>
<rect x="623" y="188.8" width="16.2" height="14.2" fill="none" stroke="#888" stroke-width="1.5"/><rect x="623" y="188" width="16.2" height="2.6" fill="#888"/><rect x="625.2" y="192.2" width="2.4" height="2.2" fill="#777"/><rect x="630.2" y="192.2" width="2.4" height="2.2" fill="#777"/><rect x="635.2" y="192.2" width="2.4" height="2.2" fill="#777"/><rect x="625.2" y="196.1" width="2.4" height="2.2" fill="#777"/><rect x="630.2" y="196.1" width="2.4" height="2.2" fill="#777"/><rect x="635.2" y="196.1" width="2.4" height="2.2" fill="#777"/><rect x="625.2" y="200.0" width="2.4" height="2.2" fill="#777"/><rect x="630.2" y="200.0" width="2.4" height="2.2" fill="#777"/><rect x="635.2" y="200.0" width="2.4" height="2.2" fill="#777"/><rect x="627.2" y="186.2" width="1.4" height="2.6" fill="#888"/><rect x="633.8" y="186.2" width="1.4" height="2.6" fill="#888"/>
<text x="662" y="199.9" font-size="12.4" fill="#1a1a1a" text-anchor="start" font-weight="normal" >8/12/2024-8/...</text>
<rect x="758.6" y="183.6" width="142.60000000000002" height="24" rx="2" fill="url(#btn)" stroke="#a6a6a6" stroke-width="1.1"/>
<line x1="760.6" y1="208.4" x2="902.2" y2="208.4" stroke="#d0d0d0" stroke-width="1.3" />
<rect x="811.3" y="184" width="1.2" height="23.4" fill="#a9a9a9" />
<path d="M767.1 191.6 V200.2 L761.9 195.9 Z" fill="none" stroke="#444" stroke-width="1.5" stroke-linejoin="round"/>
<path d="M803.5999999999999 191.6 V200.2 L808.8 195.9 Z" fill="none" stroke="#444" stroke-width="1.5" stroke-linejoin="round"/>
<circle cx="782" cy="191.8" r="2.7" fill="none" stroke="#8a8a8a" stroke-width="1.2"/><path d="M776.6 200.2 Q777 195.6 782 195.6 Q784.6 195.6 786 197" fill="none" stroke="#8a8a8a" stroke-width="1.2"/><circle cx="789.6" cy="192.4" r="3" fill="#8a8a8a"/><path d="M784.6 200 Q785 196 789.6 196 Q794.2 196 794.6 200 Z" fill="#8a8a8a"/>
<text x="813.3" y="199.9" font-size="12.4" fill="#1a1a1a" text-anchor="start" font-weight="normal" >AS ABCDE 1...</text>
<rect x="912.2" y="183.6" width="142.5999999999999" height="24" rx="2" fill="url(#btn)" stroke="#a6a6a6" stroke-width="1.1"/>
<line x1="914.2" y1="208.4" x2="1055.8" y2="208.4" stroke="#d0d0d0" stroke-width="1.3" />
<rect x="964.9" y="184" width="1.2" height="23.4" fill="#a9a9a9" />
<path d="M920.7 191.6 V200.2 L915.5 195.9 Z" fill="none" stroke="#444" stroke-width="1.5" stroke-linejoin="round"/>
<path d="M957.1999999999999 191.6 V200.2 L962.4 195.9 Z" fill="none" stroke="#444" stroke-width="1.5" stroke-linejoin="round"/>
<circle cx="938.3" cy="195.2" r="7.4" fill="#ececec" stroke="#b0b0b0" stroke-width="1.6"/><path d="M936 189 Q939.5 188.6 940.5 191 Q938.6 192.2 939.8 194 Q942.6 194.6 942.4 197.6 Q941 200.6 938.6 201.2 Q938.2 198.6 936.6 197.6 Q934.4 196.8 935 194.2 Q936.6 192.6 936 189 Z" fill="#8a8a8a"/><path d="M932 192 Q933.4 193.6 932.6 196" fill="none" stroke="#9a9a9a" stroke-width="1.4"/>
<text x="967.8" y="199.9" font-size="12.4" fill="#1a1a1a" text-anchor="start" font-weight="normal" >RM - Completo</text>
<rect x="1065.9" y="183.6" width="143.29999999999995" height="24" rx="2" fill="url(#btn)" stroke="#a6a6a6" stroke-width="1.1"/>
<line x1="1067.9" y1="208.4" x2="1210.2" y2="208.4" stroke="#d0d0d0" stroke-width="1.3" />
<rect x="1118.5" y="184" width="1.2" height="23.4" fill="#a9a9a9" />
<path d="M1074.4 191.6 V200.2 L1069.2 195.9 Z" fill="none" stroke="#444" stroke-width="1.5" stroke-linejoin="round"/>
<path d="M1110.8 191.6 V200.2 L1116 195.9 Z" fill="none" stroke="#444" stroke-width="1.5" stroke-linejoin="round"/>
<rect x="1084.5" y="186.6" width="16.6" height="1.9" fill="#8c8c8c"/><rect x="1084.5" y="189.5" width="16.6" height="1.9" fill="#8c8c8c"/><rect x="1084.5" y="192.4" width="16.6" height="1.9" fill="#8c8c8c"/><rect x="1084.5" y="195.29999999999998" width="16.6" height="1.9" fill="#8c8c8c"/><rect x="1084.5" y="198.2" width="16.6" height="1.9" fill="#8c8c8c"/><rect x="1084.5" y="201.1" width="16.6" height="1.9" fill="#8c8c8c"/><rect x="1084.5" y="186.6" width="3.5" height="17" fill="#b4b4b4"/><rect x="1084.5" y="186.6" width="16.6" height="2.6" fill="#8c8c8c"/>
<text x="1164" y="199.9" font-size="12.4" fill="#1a1a1a" text-anchor="middle" font-weight="normal" >Plan 1</text>
<rect x="371" y="217.6" width="1075.7" height="23.599999999999994" fill="#5a8ac6" />
<rect x="371" y="217.6" width="113.80000000000001" height="23.599999999999994" fill="#4a7dbd" />
<clipPath id="tclip"><rect x="371" y="240" width="1080" height="338.6"/></clipPath>
<g clip-path="url(#tclip)">
<rect x="371" y="241.2" width="113.80000000000001" height="23.7" fill="#5b8bc8" />
<rect x="371" y="263.9" width="113.80000000000001" height="1.3" fill="#4674b0" />
<rect x="484.8" y="241.2" width="961.9000000000001" height="23.7" fill="#dce6f1" />
<rect x="371" y="264.9" width="113.80000000000001" height="23.7" fill="#5b8bc8" />
<rect x="371" y="287.59999999999997" width="113.80000000000001" height="1.3" fill="#4674b0" />
<rect x="484.8" y="264.9" width="961.9000000000001" height="23.7" fill="#ffffff" />
<rect x="371" y="288.59999999999997" width="113.80000000000001" height="23.7" fill="#5b8bc8" />
<rect x="371" y="311.29999999999995" width="113.80000000000001" height="1.3" fill="#4674b0" />
<rect x="484.8" y="288.59999999999997" width="961.9000000000001" height="23.7" fill="#dce6f1" />
<rect x="371" y="312.29999999999995" width="113.80000000000001" height="23.7" fill="#5b8bc8" />
<rect x="371" y="334.99999999999994" width="113.80000000000001" height="1.3" fill="#4674b0" />
<rect x="484.8" y="312.29999999999995" width="961.9000000000001" height="23.7" fill="#ffffff" />
<rect x="371" y="336.0" width="113.80000000000001" height="23.7" fill="#5b8bc8" />
<rect x="371" y="358.7" width="113.80000000000001" height="1.3" fill="#4674b0" />
<rect x="484.8" y="336.0" width="961.9000000000001" height="23.7" fill="#dce6f1" />
<rect x="371" y="359.7" width="113.80000000000001" height="23.7" fill="#5b8bc8" />
<rect x="371" y="382.4" width="113.80000000000001" height="1.3" fill="#4674b0" />
<rect x="484.8" y="359.7" width="961.9000000000001" height="23.7" fill="#ffffff" />
<rect x="371" y="383.4" width="113.80000000000001" height="23.7" fill="#5b8bc8" />
<rect x="371" y="406.09999999999997" width="113.80000000000001" height="1.3" fill="#4674b0" />
<rect x="484.8" y="383.4" width="961.9000000000001" height="23.7" fill="#dce6f1" />
<rect x="371" y="407.1" width="113.80000000000001" height="23.7" fill="#5b8bc8" />
<rect x="371" y="429.8" width="113.80000000000001" height="1.3" fill="#4674b0" />
<rect x="484.8" y="407.1" width="961.9000000000001" height="23.7" fill="#ffffff" />
<rect x="371" y="430.79999999999995" width="113.80000000000001" height="23.7" fill="#5b8bc8" />
<rect x="371" y="453.49999999999994" width="113.80000000000001" height="1.3" fill="#4674b0" />
<rect x="484.8" y="430.79999999999995" width="961.9000000000001" height="23.7" fill="#dce6f1" />
<rect x="371" y="454.5" width="113.80000000000001" height="23.7" fill="#5b8bc8" />
<rect x="371" y="477.2" width="113.80000000000001" height="1.3" fill="#4674b0" />
<rect x="484.8" y="454.5" width="961.9000000000001" height="23.7" fill="#ffffff" />
<rect x="371" y="478.2" width="113.80000000000001" height="23.7" fill="#5b8bc8" />
<rect x="371" y="500.9" width="113.80000000000001" height="1.3" fill="#4674b0" />
<rect x="484.8" y="478.2" width="961.9000000000001" height="23.7" fill="#dce6f1" />
<rect x="371" y="501.9" width="113.80000000000001" height="23.7" fill="#5b8bc8" />
<rect x="371" y="524.6" width="113.80000000000001" height="1.3" fill="#4674b0" />
<rect x="484.8" y="501.9" width="961.9000000000001" height="23.7" fill="#ffffff" />
<rect x="371" y="525.5999999999999" width="113.80000000000001" height="23.7" fill="#5b8bc8" />
<rect x="371" y="548.3" width="113.80000000000001" height="1.3" fill="#4674b0" />
<rect x="484.8" y="525.5999999999999" width="961.9000000000001" height="23.7" fill="#dce6f1" />
<rect x="371" y="549.3" width="113.80000000000001" height="23.7" fill="#5b8bc8" />
<rect x="371" y="572.0" width="113.80000000000001" height="1.3" fill="#4674b0" />
<rect x="484.8" y="549.3" width="961.9000000000001" height="23.7" fill="#ffffff" />
<rect x="371" y="573.0" width="113.80000000000001" height="23.7" fill="#5b8bc8" />
<rect x="371" y="595.7" width="113.80000000000001" height="1.3" fill="#4674b0" />
<rect x="484.8" y="573.0" width="961.9000000000001" height="23.7" fill="#dce6f1" />
<rect x="571.5" y="241.2" width="1" height="337.40000000000003" fill="#eef2f7" />
<rect x="658.8" y="241.2" width="1" height="337.40000000000003" fill="#eef2f7" />
<rect x="746.1" y="241.2" width="1" height="337.40000000000003" fill="#eef2f7" />
<rect x="833.5" y="241.2" width="1" height="337.40000000000003" fill="#eef2f7" />
<rect x="920.8" y="241.2" width="1" height="337.40000000000003" fill="#eef2f7" />
<rect x="1008.3" y="241.2" width="1" height="337.40000000000003" fill="#eef2f7" />
<rect x="1095.7" y="241.2" width="1" height="337.40000000000003" fill="#eef2f7" />
<rect x="1183.2" y="241.2" width="1" height="337.40000000000003" fill="#eef2f7" />
<rect x="1270.7" y="241.2" width="1" height="337.40000000000003" fill="#eef2f7" />
<rect x="1358.3" y="241.2" width="1" height="337.40000000000003" fill="#eef2f7" />
<text x="374.5" y="256.3" font-size="13.8" fill="#f4f7fb" text-anchor="start" font-weight="normal"  textLength="18.07" lengthAdjust="spacingAndGlyphs">1.0</text>
<text x="567.6" y="256.3" font-size="14.2" fill="#1a1a1a" text-anchor="end" font-weight="normal"  textLength="25.3" lengthAdjust="spacingAndGlyphs">0.70</text>
<text x="654.9" y="256.3" font-size="14.2" fill="#1a1a1a" text-anchor="end" font-weight="normal"  textLength="25.3" lengthAdjust="spacingAndGlyphs">0.20</text>
<text x="742.2" y="256.3" font-size="14.2" fill="#1a1a1a" text-anchor="end" font-weight="normal"  textLength="25.3" lengthAdjust="spacingAndGlyphs">0.06</text>
<text x="829.6" y="256.3" font-size="14.2" fill="#1a1a1a" text-anchor="end" font-weight="normal"  textLength="25.3" lengthAdjust="spacingAndGlyphs">0.02</text>
<text x="916.9" y="256.3" font-size="14.2" fill="#1a1a1a" text-anchor="end" font-weight="normal"  textLength="25.3" lengthAdjust="spacingAndGlyphs">0.01</text>
<text x="1004.4" y="256.3" font-size="14.2" fill="#1a1a1a" text-anchor="end" font-weight="normal"  textLength="25.3" lengthAdjust="spacingAndGlyphs">0.06</text>
<text x="1091.8" y="256.3" font-size="14.2" fill="#1a1a1a" text-anchor="end" font-weight="normal"  textLength="25.3" lengthAdjust="spacingAndGlyphs">0.06</text>
<text x="1179.3" y="256.3" font-size="14.2" fill="#1a1a1a" text-anchor="end" font-weight="normal"  textLength="25.3" lengthAdjust="spacingAndGlyphs">0.06</text>
<text x="1266.8" y="256.3" font-size="14.2" fill="#1a1a1a" text-anchor="end" font-weight="normal"  textLength="25.3" lengthAdjust="spacingAndGlyphs">0.02</text>
<text x="1354.3999999999999" y="256.3" font-size="14.2" fill="#1a1a1a" text-anchor="end" font-weight="normal"  textLength="25.3" lengthAdjust="spacingAndGlyphs">0.01</text>
<text x="1442.3" y="256.3" font-size="14.2" fill="#1a1a1a" text-anchor="end" font-weight="normal"  textLength="7.23" lengthAdjust="spacingAndGlyphs">1</text>
<text x="374.5" y="280.0" font-size="13.8" fill="#f4f7fb" text-anchor="start" font-weight="normal"  textLength="25.3" lengthAdjust="spacingAndGlyphs">11.0</text>
<text x="567.6" y="280.0" font-size="14.2" fill="#1a1a1a" text-anchor="end" font-weight="normal"  textLength="25.3" lengthAdjust="spacingAndGlyphs">1.84</text>
<text x="654.9" y="280.0" font-size="14.2" fill="#1a1a1a" text-anchor="end" font-weight="normal"  textLength="25.3" lengthAdjust="spacingAndGlyphs">1.32</text>
<text x="742.2" y="280.0" font-size="14.2" fill="#1a1a1a" text-anchor="end" font-weight="normal"  textLength="25.3" lengthAdjust="spacingAndGlyphs">1.04</text>
<text x="829.6" y="280.0" font-size="14.2" fill="#1a1a1a" text-anchor="end" font-weight="normal"  textLength="25.3" lengthAdjust="spacingAndGlyphs">0.84</text>
<text x="916.9" y="280.0" font-size="14.2" fill="#1a1a1a" text-anchor="end" font-weight="normal"  textLength="25.3" lengthAdjust="spacingAndGlyphs">0.68</text>
<text x="1004.4" y="280.0" font-size="14.2" fill="#1a1a1a" text-anchor="end" font-weight="normal"  textLength="25.3" lengthAdjust="spacingAndGlyphs">1.04</text>
<text x="1091.8" y="280.0" font-size="14.2" fill="#1a1a1a" text-anchor="end" font-weight="normal"  textLength="25.3" lengthAdjust="spacingAndGlyphs">1.04</text>
<text x="1179.3" y="280.0" font-size="14.2" fill="#1a1a1a" text-anchor="end" font-weight="normal"  textLength="25.3" lengthAdjust="spacingAndGlyphs">1.04</text>
<text x="1266.8" y="280.0" font-size="14.2" fill="#1a1a1a" text-anchor="end" font-weight="normal"  textLength="25.3" lengthAdjust="spacingAndGlyphs">0.84</text>
<text x="1354.3999999999999" y="280.0" font-size="14.2" fill="#1a1a1a" text-anchor="end" font-weight="normal"  textLength="25.3" lengthAdjust="spacingAndGlyphs">0.68</text>
<text x="1442.3" y="280.0" font-size="14.2" fill="#1a1a1a" text-anchor="end" font-weight="normal"  textLength="7.23" lengthAdjust="spacingAndGlyphs">6</text>
<text x="374.5" y="303.7" font-size="13.8" fill="#f4f7fb" text-anchor="start" font-weight="normal"  textLength="25.3" lengthAdjust="spacingAndGlyphs">21.0</text>
<text x="567.6" y="303.7" font-size="14.2" fill="#1a1a1a" text-anchor="end" font-weight="normal"  textLength="25.3" lengthAdjust="spacingAndGlyphs">2.15</text>
<text x="654.9" y="303.7" font-size="14.2" fill="#1a1a1a" text-anchor="end" font-weight="normal"  textLength="25.3" lengthAdjust="spacingAndGlyphs">1.63</text>
<text x="742.2" y="303.7" font-size="14.2" fill="#1a1a1a" text-anchor="end" font-weight="normal"  textLength="25.3" lengthAdjust="spacingAndGlyphs">1.37</text>
<text x="829.6" y="303.7" font-size="14.2" fill="#1a1a1a" text-anchor="end" font-weight="normal"  textLength="25.3" lengthAdjust="spacingAndGlyphs">1.20</text>
<text x="916.9" y="303.7" font-size="14.2" fill="#1a1a1a" text-anchor="end" font-weight="normal"  textLength="25.3" lengthAdjust="spacingAndGlyphs">1.07</text>
<text x="1004.4" y="303.7" font-size="14.2" fill="#1a1a1a" text-anchor="end" font-weight="normal"  textLength="25.3" lengthAdjust="spacingAndGlyphs">1.37</text>
<text x="1091.8" y="303.7" font-size="14.2" fill="#1a1a1a" text-anchor="end" font-weight="normal"  textLength="25.3" lengthAdjust="spacingAndGlyphs">1.37</text>
<text x="1179.3" y="303.7" font-size="14.2" fill="#1a1a1a" text-anchor="end" font-weight="normal"  textLength="25.3" lengthAdjust="spacingAndGlyphs">1.37</text>
<text x="1266.8" y="303.7" font-size="14.2" fill="#1a1a1a" text-anchor="end" font-weight="normal"  textLength="25.3" lengthAdjust="spacingAndGlyphs">1.20</text>
<text x="1354.3999999999999" y="303.7" font-size="14.2" fill="#1a1a1a" text-anchor="end" font-weight="normal"  textLength="25.3" lengthAdjust="spacingAndGlyphs">1.07</text>
<text x="1442.3" y="303.7" font-size="14.2" fill="#1a1a1a" text-anchor="end" font-weight="normal"  textLength="14.46" lengthAdjust="spacingAndGlyphs">10</text>
<text x="374.5" y="327.4" font-size="13.8" fill="#f4f7fb" text-anchor="start" font-weight="normal"  textLength="25.3" lengthAdjust="spacingAndGlyphs">31.0</text>
<text x="567.6" y="327.4" font-size="14.2" fill="#1a1a1a" text-anchor="end" font-weight="normal"  textLength="25.3" lengthAdjust="spacingAndGlyphs">2.37</text>
<text x="654.9" y="327.4" font-size="14.2" fill="#1a1a1a" text-anchor="end" font-weight="normal"  textLength="25.3" lengthAdjust="spacingAndGlyphs">1.85</text>
<text x="742.2" y="327.4" font-size="14.2" fill="#1a1a1a" text-anchor="end" font-weight="normal"  textLength="25.3" lengthAdjust="spacingAndGlyphs">1.59</text>
<text x="829.6" y="327.4" font-size="14.2" fill="#1a1a1a" text-anchor="end" font-weight="normal"  textLength="25.3" lengthAdjust="spacingAndGlyphs">1.42</text>
<text x="916.9" y="327.4" font-size="14.2" fill="#1a1a1a" text-anchor="end" font-weight="normal"  textLength="25.3" lengthAdjust="spacingAndGlyphs">1.30</text>
<text x="1004.4" y="327.4" font-size="14.2" fill="#1a1a1a" text-anchor="end" font-weight="normal"  textLength="25.3" lengthAdjust="spacingAndGlyphs">1.59</text>
<text x="1091.8" y="327.4" font-size="14.2" fill="#1a1a1a" text-anchor="end" font-weight="normal"  textLength="25.3" lengthAdjust="spacingAndGlyphs">1.59</text>
<text x="1179.3" y="327.4" font-size="14.2" fill="#1a1a1a" text-anchor="end" font-weight="normal"  textLength="25.3" lengthAdjust="spacingAndGlyphs">1.59</text>
<text x="1266.8" y="327.4" font-size="14.2" fill="#1a1a1a" text-anchor="end" font-weight="normal"  textLength="25.3" lengthAdjust="spacingAndGlyphs">1.42</text>
<text x="1354.3999999999999" y="327.4" font-size="14.2" fill="#1a1a1a" text-anchor="end" font-weight="normal"  textLength="25.3" lengthAdjust="spacingAndGlyphs">1.30</text>
<text x="1442.3" y="327.4" font-size="14.2" fill="#1a1a1a" text-anchor="end" font-weight="normal"  textLength="14.46" lengthAdjust="spacingAndGlyphs">13</text>
<text x="374.5" y="351.1" font-size="13.8" fill="#f4f7fb" text-anchor="start" font-weight="normal"  textLength="25.3" lengthAdjust="spacingAndGlyphs">41.0</text>
<text x="567.6" y="351.1" font-size="14.2" fill="#1a1a1a" text-anchor="end" font-weight="normal"  textLength="25.3" lengthAdjust="spacingAndGlyphs">2.53</text>
<text x="654.9" y="351.1" font-size="14.2" fill="#1a1a1a" text-anchor="end" font-weight="normal"  textLength="25.3" lengthAdjust="spacingAndGlyphs">2.02</text>
<text x="742.2" y="351.1" font-size="14.2" fill="#1a1a1a" text-anchor="end" font-weight="normal"  textLength="25.3" lengthAdjust="spacingAndGlyphs">1.75</text>
<text x="829.6" y="351.1" font-size="14.2" fill="#1a1a1a" text-anchor="end" font-weight="normal"  textLength="25.3" lengthAdjust="spacingAndGlyphs">1.57</text>
<text x="916.9" y="351.1" font-size="14.2" fill="#1a1a1a" text-anchor="end" font-weight="normal"  textLength="25.3" lengthAdjust="spacingAndGlyphs">1.45</text>
<text x="1004.4" y="351.1" font-size="14.2" fill="#1a1a1a" text-anchor="end" font-weight="normal"  textLength="25.3" lengthAdjust="spacingAndGlyphs">1.75</text>
<text x="1091.8" y="351.1" font-size="14.2" fill="#1a1a1a" text-anchor="end" font-weight="normal"  textLength="25.3" lengthAdjust="spacingAndGlyphs">1.75</text>
<text x="1179.3" y="351.1" font-size="14.2" fill="#1a1a1a" text-anchor="end" font-weight="normal"  textLength="25.3" lengthAdjust="spacingAndGlyphs">1.75</text>
<text x="1266.8" y="351.1" font-size="14.2" fill="#1a1a1a" text-anchor="end" font-weight="normal"  textLength="25.3" lengthAdjust="spacingAndGlyphs">1.57</text>
<text x="1354.3999999999999" y="351.1" font-size="14.2" fill="#1a1a1a" text-anchor="end" font-weight="normal"  textLength="25.3" lengthAdjust="spacingAndGlyphs">1.45</text>
<text x="1442.3" y="351.1" font-size="14.2" fill="#1a1a1a" text-anchor="end" font-weight="normal"  textLength="14.46" lengthAdjust="spacingAndGlyphs">16</text>
<text x="374.5" y="374.8" font-size="13.8" fill="#f4f7fb" text-anchor="start" font-weight="normal"  textLength="25.3" lengthAdjust="spacingAndGlyphs">51.0</text>
<text x="567.6" y="374.8" font-size="14.2" fill="#1a1a1a" text-anchor="end" font-weight="normal"  textLength="25.3" lengthAdjust="spacingAndGlyphs">2.67</text>
<text x="654.9" y="374.8" font-size="14.2" fill="#1a1a1a" text-anchor="end" font-weight="normal"  textLength="25.3" lengthAdjust="spacingAndGlyphs">2.17</text>
<text x="742.2" y="374.8" font-size="14.2" fill="#1a1a1a" text-anchor="end" font-weight="normal"  textLength="25.3" lengthAdjust="spacingAndGlyphs">1.90</text>
<text x="829.6" y="374.8" font-size="14.2" fill="#1a1a1a" text-anchor="end" font-weight="normal"  textLength="25.3" lengthAdjust="spacingAndGlyphs">1.72</text>
<text x="916.9" y="374.8" font-size="14.2" fill="#1a1a1a" text-anchor="end" font-weight="normal"  textLength="25.3" lengthAdjust="spacingAndGlyphs">1.58</text>
<text x="1004.4" y="374.8" font-size="14.2" fill="#1a1a1a" text-anchor="end" font-weight="normal"  textLength="25.3" lengthAdjust="spacingAndGlyphs">1.90</text>
<text x="1091.8" y="374.8" font-size="14.2" fill="#1a1a1a" text-anchor="end" font-weight="normal"  textLength="25.3" lengthAdjust="spacingAndGlyphs">1.90</text>
<text x="1179.3" y="374.8" font-size="14.2" fill="#1a1a1a" text-anchor="end" font-weight="normal"  textLength="25.3" lengthAdjust="spacingAndGlyphs">1.90</text>
<text x="1266.8" y="374.8" font-size="14.2" fill="#1a1a1a" text-anchor="end" font-weight="normal"  textLength="25.3" lengthAdjust="spacingAndGlyphs">1.72</text>
<text x="1354.3999999999999" y="374.8" font-size="14.2" fill="#1a1a1a" text-anchor="end" font-weight="normal"  textLength="25.3" lengthAdjust="spacingAndGlyphs">1.58</text>
<text x="1442.3" y="374.8" font-size="14.2" fill="#1a1a1a" text-anchor="end" font-weight="normal"  textLength="14.46" lengthAdjust="spacingAndGlyphs">19</text>
<text x="374.5" y="398.5" font-size="13.8" fill="#f4f7fb" text-anchor="start" font-weight="normal"  textLength="25.3" lengthAdjust="spacingAndGlyphs">61.0</text>
<text x="567.6" y="398.5" font-size="14.2" fill="#1a1a1a" text-anchor="end" font-weight="normal"  textLength="25.3" lengthAdjust="spacingAndGlyphs">2.78</text>
<text x="654.9" y="398.5" font-size="14.2" fill="#1a1a1a" text-anchor="end" font-weight="normal"  textLength="25.3" lengthAdjust="spacingAndGlyphs">2.28</text>
<text x="742.2" y="398.5" font-size="14.2" fill="#1a1a1a" text-anchor="end" font-weight="normal"  textLength="25.3" lengthAdjust="spacingAndGlyphs">2.01</text>
<text x="829.6" y="398.5" font-size="14.2" fill="#1a1a1a" text-anchor="end" font-weight="normal"  textLength="25.3" lengthAdjust="spacingAndGlyphs">1.83</text>
<text x="916.9" y="398.5" font-size="14.2" fill="#1a1a1a" text-anchor="end" font-weight="normal"  textLength="25.3" lengthAdjust="spacingAndGlyphs">1.69</text>
<text x="1004.4" y="398.5" font-size="14.2" fill="#1a1a1a" text-anchor="end" font-weight="normal"  textLength="25.3" lengthAdjust="spacingAndGlyphs">2.01</text>
<text x="1091.8" y="398.5" font-size="14.2" fill="#1a1a1a" text-anchor="end" font-weight="normal"  textLength="25.3" lengthAdjust="spacingAndGlyphs">2.01</text>
<text x="1179.3" y="398.5" font-size="14.2" fill="#1a1a1a" text-anchor="end" font-weight="normal"  textLength="25.3" lengthAdjust="spacingAndGlyphs">2.01</text>
<text x="1266.8" y="398.5" font-size="14.2" fill="#1a1a1a" text-anchor="end" font-weight="normal"  textLength="25.3" lengthAdjust="spacingAndGlyphs">1.83</text>
<text x="1354.3999999999999" y="398.5" font-size="14.2" fill="#1a1a1a" text-anchor="end" font-weight="normal"  textLength="25.3" lengthAdjust="spacingAndGlyphs">1.69</text>
<text x="1442.3" y="398.5" font-size="14.2" fill="#1a1a1a" text-anchor="end" font-weight="normal"  textLength="14.46" lengthAdjust="spacingAndGlyphs">22</text>
<text x="374.5" y="422.20000000000005" font-size="13.8" fill="#f4f7fb" text-anchor="start" font-weight="normal"  textLength="25.3" lengthAdjust="spacingAndGlyphs">71.0</text>
<text x="567.6" y="422.20000000000005" font-size="14.2" fill="#1a1a1a" text-anchor="end" font-weight="normal"  textLength="25.3" lengthAdjust="spacingAndGlyphs">2.86</text>
<text x="654.9" y="422.20000000000005" font-size="14.2" fill="#1a1a1a" text-anchor="end" font-weight="normal"  textLength="25.3" lengthAdjust="spacingAndGlyphs">2.36</text>
<text x="742.2" y="422.20000000000005" font-size="14.2" fill="#1a1a1a" text-anchor="end" font-weight="normal"  textLength="25.3" lengthAdjust="spacingAndGlyphs">2.08</text>
<text x="829.6" y="422.20000000000005" font-size="14.2" fill="#1a1a1a" text-anchor="end" font-weight="normal"  textLength="25.3" lengthAdjust="spacingAndGlyphs">1.91</text>
<text x="916.9" y="422.20000000000005" font-size="14.2" fill="#1a1a1a" text-anchor="end" font-weight="normal"  textLength="25.3" lengthAdjust="spacingAndGlyphs">1.78</text>
<text x="1004.4" y="422.20000000000005" font-size="14.2" fill="#1a1a1a" text-anchor="end" font-weight="normal"  textLength="25.3" lengthAdjust="spacingAndGlyphs">2.08</text>
<text x="1091.8" y="422.20000000000005" font-size="14.2" fill="#1a1a1a" text-anchor="end" font-weight="normal"  textLength="25.3" lengthAdjust="spacingAndGlyphs">2.08</text>
<text x="1179.3" y="422.20000000000005" font-size="14.2" fill="#1a1a1a" text-anchor="end" font-weight="normal"  textLength="25.3" lengthAdjust="spacingAndGlyphs">2.08</text>
<text x="1266.8" y="422.20000000000005" font-size="14.2" fill="#1a1a1a" text-anchor="end" font-weight="normal"  textLength="25.3" lengthAdjust="spacingAndGlyphs">1.91</text>
<text x="1354.3999999999999" y="422.20000000000005" font-size="14.2" fill="#1a1a1a" text-anchor="end" font-weight="normal"  textLength="25.3" lengthAdjust="spacingAndGlyphs">1.78</text>
<text x="1442.3" y="422.20000000000005" font-size="14.2" fill="#1a1a1a" text-anchor="end" font-weight="normal"  textLength="14.46" lengthAdjust="spacingAndGlyphs">25</text>
<text x="374.5" y="445.9" font-size="13.8" fill="#f4f7fb" text-anchor="start" font-weight="normal"  textLength="25.3" lengthAdjust="spacingAndGlyphs">81.0</text>
<text x="567.6" y="445.9" font-size="14.2" fill="#1a1a1a" text-anchor="end" font-weight="normal"  textLength="25.3" lengthAdjust="spacingAndGlyphs">2.86</text>
<text x="654.9" y="445.9" font-size="14.2" fill="#1a1a1a" text-anchor="end" font-weight="normal"  textLength="25.3" lengthAdjust="spacingAndGlyphs">2.36</text>
<text x="742.2" y="445.9" font-size="14.2" fill="#1a1a1a" text-anchor="end" font-weight="normal"  textLength="25.3" lengthAdjust="spacingAndGlyphs">2.08</text>
<text x="829.6" y="445.9" font-size="14.2" fill="#1a1a1a" text-anchor="end" font-weight="normal"  textLength="25.3" lengthAdjust="spacingAndGlyphs">1.91</text>
<text x="916.9" y="445.9" font-size="14.2" fill="#1a1a1a" text-anchor="end" font-weight="normal"  textLength="25.3" lengthAdjust="spacingAndGlyphs">1.78</text>
<text x="1004.4" y="445.9" font-size="14.2" fill="#1a1a1a" text-anchor="end" font-weight="normal"  textLength="25.3" lengthAdjust="spacingAndGlyphs">2.08</text>
<text x="1091.8" y="445.9" font-size="14.2" fill="#1a1a1a" text-anchor="end" font-weight="normal"  textLength="25.3" lengthAdjust="spacingAndGlyphs">2.08</text>
<text x="1179.3" y="445.9" font-size="14.2" fill="#1a1a1a" text-anchor="end" font-weight="normal"  textLength="25.3" lengthAdjust="spacingAndGlyphs">2.08</text>
<text x="1266.8" y="445.9" font-size="14.2" fill="#1a1a1a" text-anchor="end" font-weight="normal"  textLength="25.3" lengthAdjust="spacingAndGlyphs">1.91</text>
<text x="1354.3999999999999" y="445.9" font-size="14.2" fill="#1a1a1a" text-anchor="end" font-weight="normal"  textLength="25.3" lengthAdjust="spacingAndGlyphs">1.78</text>
<text x="1442.3" y="445.9" font-size="14.2" fill="#1a1a1a" text-anchor="end" font-weight="normal"  textLength="14.46" lengthAdjust="spacingAndGlyphs">28</text>
<text x="374.5" y="469.6" font-size="13.8" fill="#f4f7fb" text-anchor="start" font-weight="normal"  textLength="25.3" lengthAdjust="spacingAndGlyphs">91.0</text>
<text x="567.6" y="469.6" font-size="14.2" fill="#1a1a1a" text-anchor="end" font-weight="normal"  textLength="25.3" lengthAdjust="spacingAndGlyphs">2.86</text>
<text x="654.9" y="469.6" font-size="14.2" fill="#1a1a1a" text-anchor="end" font-weight="normal"  textLength="25.3" lengthAdjust="spacingAndGlyphs">2.36</text>
<text x="742.2" y="469.6" font-size="14.2" fill="#1a1a1a" text-anchor="end" font-weight="normal"  textLength="25.3" lengthAdjust="spacingAndGlyphs">2.08</text>
<text x="829.6" y="469.6" font-size="14.2" fill="#1a1a1a" text-anchor="end" font-weight="normal"  textLength="25.3" lengthAdjust="spacingAndGlyphs">1.91</text>
<text x="916.9" y="469.6" font-size="14.2" fill="#1a1a1a" text-anchor="end" font-weight="normal"  textLength="25.3" lengthAdjust="spacingAndGlyphs">1.78</text>
<text x="1004.4" y="469.6" font-size="14.2" fill="#1a1a1a" text-anchor="end" font-weight="normal"  textLength="25.3" lengthAdjust="spacingAndGlyphs">2.08</text>
<text x="1091.8" y="469.6" font-size="14.2" fill="#1a1a1a" text-anchor="end" font-weight="normal"  textLength="25.3" lengthAdjust="spacingAndGlyphs">2.08</text>
<text x="1179.3" y="469.6" font-size="14.2" fill="#1a1a1a" text-anchor="end" font-weight="normal"  textLength="25.3" lengthAdjust="spacingAndGlyphs">2.08</text>
<text x="1266.8" y="469.6" font-size="14.2" fill="#1a1a1a" text-anchor="end" font-weight="normal"  textLength="25.3" lengthAdjust="spacingAndGlyphs">1.91</text>
<text x="1354.3999999999999" y="469.6" font-size="14.2" fill="#1a1a1a" text-anchor="end" font-weight="normal"  textLength="25.3" lengthAdjust="spacingAndGlyphs">1.78</text>
<text x="1442.3" y="469.6" font-size="14.2" fill="#1a1a1a" text-anchor="end" font-weight="normal"  textLength="14.46" lengthAdjust="spacingAndGlyphs">32</text>
<text x="374.5" y="493.3" font-size="13.8" fill="#f4f7fb" text-anchor="start" font-weight="normal"  textLength="32.53" lengthAdjust="spacingAndGlyphs">101.0</text>
<text x="567.6" y="493.3" font-size="14.2" fill="#1a1a1a" text-anchor="end" font-weight="normal"  textLength="25.3" lengthAdjust="spacingAndGlyphs">2.86</text>
<text x="654.9" y="493.3" font-size="14.2" fill="#1a1a1a" text-anchor="end" font-weight="normal"  textLength="25.3" lengthAdjust="spacingAndGlyphs">2.36</text>
<text x="742.2" y="493.3" font-size="14.2" fill="#1a1a1a" text-anchor="end" font-weight="normal"  textLength="25.3" lengthAdjust="spacingAndGlyphs">2.08</text>
<text x="829.6" y="493.3" font-size="14.2" fill="#1a1a1a" text-anchor="end" font-weight="normal"  textLength="25.3" lengthAdjust="spacingAndGlyphs">1.91</text>
<text x="916.9" y="493.3" font-size="14.2" fill="#1a1a1a" text-anchor="end" font-weight="normal"  textLength="25.3" lengthAdjust="spacingAndGlyphs">1.78</text>
<text x="1004.4" y="493.3" font-size="14.2" fill="#1a1a1a" text-anchor="end" font-weight="normal"  textLength="25.3" lengthAdjust="spacingAndGlyphs">2.08</text>
<text x="1091.8" y="493.3" font-size="14.2" fill="#1a1a1a" text-anchor="end" font-weight="normal"  textLength="25.3" lengthAdjust="spacingAndGlyphs">2.08</text>
<text x="1179.3" y="493.3" font-size="14.2" fill="#1a1a1a" text-anchor="end" font-weight="normal"  textLength="25.3" lengthAdjust="spacingAndGlyphs">2.08</text>
<text x="1266.8" y="493.3" font-size="14.2" fill="#1a1a1a" text-anchor="end" font-weight="normal"  textLength="25.3" lengthAdjust="spacingAndGlyphs">1.91</text>
<text x="1354.3999999999999" y="493.3" font-size="14.2" fill="#1a1a1a" text-anchor="end" font-weight="normal"  textLength="25.3" lengthAdjust="spacingAndGlyphs">1.78</text>
<text x="1442.3" y="493.3" font-size="14.2" fill="#1a1a1a" text-anchor="end" font-weight="normal"  textLength="14.46" lengthAdjust="spacingAndGlyphs">35</text>
<text x="374.5" y="517.0" font-size="13.8" fill="#f4f7fb" text-anchor="start" font-weight="normal"  textLength="32.53" lengthAdjust="spacingAndGlyphs">111.0</text>
<text x="567.6" y="517.0" font-size="14.2" fill="#1a1a1a" text-anchor="end" font-weight="normal"  textLength="25.3" lengthAdjust="spacingAndGlyphs">2.86</text>
<text x="654.9" y="517.0" font-size="14.2" fill="#1a1a1a" text-anchor="end" font-weight="normal"  textLength="25.3" lengthAdjust="spacingAndGlyphs">2.36</text>
<text x="742.2" y="517.0" font-size="14.2" fill="#1a1a1a" text-anchor="end" font-weight="normal"  textLength="25.3" lengthAdjust="spacingAndGlyphs">2.08</text>
<text x="829.6" y="517.0" font-size="14.2" fill="#1a1a1a" text-anchor="end" font-weight="normal"  textLength="25.3" lengthAdjust="spacingAndGlyphs">1.91</text>
<text x="916.9" y="517.0" font-size="14.2" fill="#1a1a1a" text-anchor="end" font-weight="normal"  textLength="25.3" lengthAdjust="spacingAndGlyphs">1.78</text>
<text x="1004.4" y="517.0" font-size="14.2" fill="#1a1a1a" text-anchor="end" font-weight="normal"  textLength="25.3" lengthAdjust="spacingAndGlyphs">2.08</text>
<text x="1091.8" y="517.0" font-size="14.2" fill="#1a1a1a" text-anchor="end" font-weight="normal"  textLength="25.3" lengthAdjust="spacingAndGlyphs">2.08</text>
<text x="1179.3" y="517.0" font-size="14.2" fill="#1a1a1a" text-anchor="end" font-weight="normal"  textLength="25.3" lengthAdjust="spacingAndGlyphs">2.08</text>
<text x="1266.8" y="517.0" font-size="14.2" fill="#1a1a1a" text-anchor="end" font-weight="normal"  textLength="25.3" lengthAdjust="spacingAndGlyphs">1.91</text>
<text x="1354.3999999999999" y="517.0" font-size="14.2" fill="#1a1a1a" text-anchor="end" font-weight="normal"  textLength="25.3" lengthAdjust="spacingAndGlyphs">1.78</text>
<text x="1442.3" y="517.0" font-size="14.2" fill="#1a1a1a" text-anchor="end" font-weight="normal"  textLength="14.46" lengthAdjust="spacingAndGlyphs">39</text>
<text x="374.5" y="540.7" font-size="13.8" fill="#f4f7fb" text-anchor="start" font-weight="normal"  textLength="32.53" lengthAdjust="spacingAndGlyphs">121.0</text>
<text x="567.6" y="540.7" font-size="14.2" fill="#1a1a1a" text-anchor="end" font-weight="normal"  textLength="25.3" lengthAdjust="spacingAndGlyphs">2.86</text>
<text x="654.9" y="540.7" font-size="14.2" fill="#1a1a1a" text-anchor="end" font-weight="normal"  textLength="25.3" lengthAdjust="spacingAndGlyphs">2.36</text>
<text x="742.2" y="540.7" font-size="14.2" fill="#1a1a1a" text-anchor="end" font-weight="normal"  textLength="25.3" lengthAdjust="spacingAndGlyphs">2.08</text>
<text x="829.6" y="540.7" font-size="14.2" fill="#1a1a1a" text-anchor="end" font-weight="normal"  textLength="25.3" lengthAdjust="spacingAndGlyphs">1.91</text>
<text x="916.9" y="540.7" font-size="14.2" fill="#1a1a1a" text-anchor="end" font-weight="normal"  textLength="25.3" lengthAdjust="spacingAndGlyphs">1.78</text>
<text x="1004.4" y="540.7" font-size="14.2" fill="#1a1a1a" text-anchor="end" font-weight="normal"  textLength="25.3" lengthAdjust="spacingAndGlyphs">2.08</text>
<text x="1091.8" y="540.7" font-size="14.2" fill="#1a1a1a" text-anchor="end" font-weight="normal"  textLength="25.3" lengthAdjust="spacingAndGlyphs">2.08</text>
<text x="1179.3" y="540.7" font-size="14.2" fill="#1a1a1a" text-anchor="end" font-weight="normal"  textLength="25.3" lengthAdjust="spacingAndGlyphs">2.08</text>
<text x="1266.8" y="540.7" font-size="14.2" fill="#1a1a1a" text-anchor="end" font-weight="normal"  textLength="25.3" lengthAdjust="spacingAndGlyphs">1.91</text>
<text x="1354.3999999999999" y="540.7" font-size="14.2" fill="#1a1a1a" text-anchor="end" font-weight="normal"  textLength="25.3" lengthAdjust="spacingAndGlyphs">1.78</text>
<text x="1442.3" y="540.7" font-size="14.2" fill="#1a1a1a" text-anchor="end" font-weight="normal"  textLength="14.46" lengthAdjust="spacingAndGlyphs">42</text>
<text x="374.5" y="564.4" font-size="13.8" fill="#f4f7fb" text-anchor="start" font-weight="normal"  textLength="32.53" lengthAdjust="spacingAndGlyphs">131.0</text>
<text x="567.6" y="564.4" font-size="14.2" fill="#1a1a1a" text-anchor="end" font-weight="normal"  textLength="25.3" lengthAdjust="spacingAndGlyphs">2.86</text>
<text x="654.9" y="564.4" font-size="14.2" fill="#1a1a1a" text-anchor="end" font-weight="normal"  textLength="25.3" lengthAdjust="spacingAndGlyphs">2.36</text>
<text x="742.2" y="564.4" font-size="14.2" fill="#1a1a1a" text-anchor="end" font-weight="normal"  textLength="25.3" lengthAdjust="spacingAndGlyphs">2.08</text>
<text x="829.6" y="564.4" font-size="14.2" fill="#1a1a1a" text-anchor="end" font-weight="normal"  textLength="25.3" lengthAdjust="spacingAndGlyphs">1.91</text>
<text x="916.9" y="564.4" font-size="14.2" fill="#1a1a1a" text-anchor="end" font-weight="normal"  textLength="25.3" lengthAdjust="spacingAndGlyphs">1.78</text>
<text x="1004.4" y="564.4" font-size="14.2" fill="#1a1a1a" text-anchor="end" font-weight="normal"  textLength="25.3" lengthAdjust="spacingAndGlyphs">2.08</text>
<text x="1091.8" y="564.4" font-size="14.2" fill="#1a1a1a" text-anchor="end" font-weight="normal"  textLength="25.3" lengthAdjust="spacingAndGlyphs">2.08</text>
<text x="1179.3" y="564.4" font-size="14.2" fill="#1a1a1a" text-anchor="end" font-weight="normal"  textLength="25.3" lengthAdjust="spacingAndGlyphs">2.08</text>
<text x="1266.8" y="564.4" font-size="14.2" fill="#1a1a1a" text-anchor="end" font-weight="normal"  textLength="25.3" lengthAdjust="spacingAndGlyphs">1.91</text>
<text x="1354.3999999999999" y="564.4" font-size="14.2" fill="#1a1a1a" text-anchor="end" font-weight="normal"  textLength="25.3" lengthAdjust="spacingAndGlyphs">1.78</text>
<text x="1442.3" y="564.4" font-size="14.2" fill="#1a1a1a" text-anchor="end" font-weight="normal"  textLength="14.46" lengthAdjust="spacingAndGlyphs">46</text>
</g>
<rect x="571.4" y="217.6" width="1.1" height="23.599999999999994" fill="#4c7cb8" />
<rect x="658.6999999999999" y="217.6" width="1.1" height="23.599999999999994" fill="#4c7cb8" />
<rect x="746.0" y="217.6" width="1.1" height="23.599999999999994" fill="#4c7cb8" />
<rect x="833.4" y="217.6" width="1.1" height="23.599999999999994" fill="#4c7cb8" />
<rect x="920.6999999999999" y="217.6" width="1.1" height="23.599999999999994" fill="#4c7cb8" />
<rect x="1008.1999999999999" y="217.6" width="1.1" height="23.599999999999994" fill="#4c7cb8" />
<rect x="1095.6000000000001" y="217.6" width="1.1" height="23.599999999999994" fill="#4c7cb8" />
<rect x="1183.1000000000001" y="217.6" width="1.1" height="23.599999999999994" fill="#4c7cb8" />
<rect x="1270.6000000000001" y="217.6" width="1.1" height="23.599999999999994" fill="#4c7cb8" />
<rect x="1358.2" y="217.6" width="1.1" height="23.599999999999994" fill="#4c7cb8" />
<rect x="484.0" y="217.6" width="1.4" height="24.099999999999994" fill="#cfe0f4" />
<rect x="371" y="239.7" width="113.80000000000001" height="1.5" fill="#cfe0f4" />
<rect x="484.8" y="240.2" width="961.9000000000001" height="1" fill="#4673ae" />
<text x="427.9" y="232.6" font-size="14" fill="#eef3fa" text-anchor="middle" font-weight="normal" >GRPs</text>
<text x="528.4" y="232.6" font-size="14" fill="#eef3fa" text-anchor="middle" font-weight="normal" >1+ (%)</text>
<text x="615.65" y="232.6" font-size="14" fill="#eef3fa" text-anchor="middle" font-weight="normal" >2+ (%)</text>
<text x="702.95" y="232.6" font-size="14" fill="#eef3fa" text-anchor="middle" font-weight="normal" >3+ (%)</text>
<text x="790.3" y="232.6" font-size="14" fill="#eef3fa" text-anchor="middle" font-weight="normal" >4+ (%)</text>
<text x="877.65" y="232.6" font-size="14" fill="#eef3fa" text-anchor="middle" font-weight="normal" >5+ (%)</text>
<text x="965.05" y="232.6" font-size="14" fill="#eef3fa" text-anchor="middle" font-weight="normal" >1+ Neff+ %</text>
<text x="1052.5" y="232.6" font-size="14" fill="#eef3fa" text-anchor="middle" font-weight="normal" >2+ Neff+ %</text>
<text x="1139.95" y="232.6" font-size="14" fill="#eef3fa" text-anchor="middle" font-weight="normal" >3+ Neff+ %</text>
<text x="1227.45" y="232.6" font-size="14" fill="#eef3fa" text-anchor="middle" font-weight="normal" >4+ Neff+ %</text>
<text x="1315.0" y="232.6" font-size="14" fill="#eef3fa" text-anchor="middle" font-weight="normal" >5+ Neff+ %</text>
<text x="1402.75" y="232.6" font-size="14" fill="#eef3fa" text-anchor="middle" font-weight="normal" >OTS</text>
<rect x="485.8" y="241.79999999999998" width="85.39999999999999" height="22.5" fill="none" stroke="#111" stroke-width="2"/>
<rect x="1885" y="217.4" width="19.2" height="361" fill="#f0f0f0" />
<rect x="1885" y="239" width="19.2" height="278.5" fill="#cdcdcd" />
<path d="M1890.3 232 L1894.6 227 L1898.9 232" fill="none" stroke="#555" stroke-width="2.2"/>
<path d="M1890.3 565.5 L1894.6 570.5 L1898.9 565.5" fill="none" stroke="#555" stroke-width="2.2"/>
<line x1="371" y1="583.3" x2="1905" y2="583.3" stroke="#d2d2d2" stroke-width="1.3" />
<rect x="482" y="630.6" width="41" height="198.0" fill="#e3e6eb" />
<rect x="564" y="630.6" width="41" height="198.0" fill="#e3e6eb" />
<rect x="646" y="630.6" width="41" height="198.0" fill="#e3e6eb" />
<rect x="728" y="630.6" width="41" height="198.0" fill="#e3e6eb" />
<rect x="810" y="630.6" width="41" height="198.0" fill="#e3e6eb" />
<rect x="892" y="630.6" width="41" height="198.0" fill="#e3e6eb" />
<rect x="974" y="630.6" width="41" height="198.0" fill="#e3e6eb" />
<rect x="1056" y="630.6" width="41" height="198.0" fill="#e3e6eb" />
<rect x="1138" y="630.6" width="41" height="198.0" fill="#e3e6eb" />
<rect x="1220" y="630.6" width="41" height="198.0" fill="#e3e6eb" />
<rect x="1302" y="630.6" width="41" height="198.0" fill="#e3e6eb" />
<rect x="1384" y="630.6" width="41" height="198.0" fill="#e3e6eb" />
<rect x="1466" y="630.6" width="41" height="198.0" fill="#e3e6eb" />
<rect x="1548" y="630.6" width="41" height="198.0" fill="#e3e6eb" />
<rect x="1630" y="630.6" width="41" height="198.0" fill="#e3e6eb" />
<rect x="522.5" y="630.6" width="1" height="198.0" fill="#d4d7dc" />
<rect x="563.5" y="630.6" width="1" height="198.0" fill="#d4d7dc" />
<rect x="604.5" y="630.6" width="1" height="198.0" fill="#d4d7dc" />
<rect x="645.5" y="630.6" width="1" height="198.0" fill="#d4d7dc" />
<rect x="686.5" y="630.6" width="1" height="198.0" fill="#d4d7dc" />
<rect x="727.5" y="630.6" width="1" height="198.0" fill="#d4d7dc" />
<rect x="768.5" y="630.6" width="1" height="198.0" fill="#d4d7dc" />
<rect x="809.5" y="630.6" width="1" height="198.0" fill="#d4d7dc" />
<rect x="850.5" y="630.6" width="1" height="198.0" fill="#d4d7dc" />
<rect x="891.5" y="630.6" width="1" height="198.0" fill="#d4d7dc" />
<rect x="932.5" y="630.6" width="1" height="198.0" fill="#d4d7dc" />
<rect x="973.5" y="630.6" width="1" height="198.0" fill="#d4d7dc" />
<rect x="1014.5" y="630.6" width="1" height="198.0" fill="#d4d7dc" />
<rect x="1055.5" y="630.6" width="1" height="198.0" fill="#d4d7dc" />
<rect x="1096.5" y="630.6" width="1" height="198.0" fill="#d4d7dc" />
<rect x="1137.5" y="630.6" width="1" height="198.0" fill="#d4d7dc" />
<rect x="1178.5" y="630.6" width="1" height="198.0" fill="#d4d7dc" />
<rect x="1219.5" y="630.6" width="1" height="198.0" fill="#d4d7dc" />
<rect x="1260.5" y="630.6" width="1" height="198.0" fill="#d4d7dc" />
<rect x="1301.5" y="630.6" width="1" height="198.0" fill="#d4d7dc" />
<rect x="1342.5" y="630.6" width="1" height="198.0" fill="#d4d7dc" />
<rect x="1383.5" y="630.6" width="1" height="198.0" fill="#d4d7dc" />
<rect x="1424.5" y="630.6" width="1" height="198.0" fill="#d4d7dc" />
<rect x="1465.5" y="630.6" width="1" height="198.0" fill="#d4d7dc" />
<rect x="1506.5" y="630.6" width="1" height="198.0" fill="#d4d7dc" />
<rect x="1547.5" y="630.6" width="1" height="198.0" fill="#d4d7dc" />
<rect x="1588.5" y="630.6" width="1" height="198.0" fill="#d4d7dc" />
<rect x="1629.5" y="630.6" width="1" height="198.0" fill="#d4d7dc" />
<rect x="1670.5" y="630.6" width="1" height="198.0" fill="#d4d7dc" />
<rect x="482" y="795.1" width="1222" height="1.1" fill="#d9dadd" />
<rect x="482" y="762.1" width="1222" height="1.1" fill="#d9dadd" />
<rect x="482" y="729.1" width="1222" height="1.1" fill="#d9dadd" />
<rect x="482" y="696.1" width="1222" height="1.1" fill="#d9dadd" />
<rect x="482" y="663.1" width="1222" height="1.1" fill="#d9dadd" />
<rect x="482" y="630.1" width="1222" height="1.1" fill="#d9dadd" />
<polyline points="482.0,827.9 564.0,783.7 646.0,758.0 728.0,742.8 810.0,732.9 892.0,724.3 974.0,717.1 1056.0,711.1 1138.0,711.1 1220.0,711.1 1302.0,711.1 1384.0,711.1 1466.0,711.1 1548.0,711.1 1630.0,711.1 1704.0,711.1" fill="none" stroke="#d0d0d4" stroke-opacity="0.6" stroke-width="3.3" stroke-linejoin="round"/>
<circle cx="564.0" cy="783.7" r="1.5" fill="#cfcfd2"/>
<circle cx="646.0" cy="758.0" r="1.5" fill="#cfcfd2"/>
<circle cx="728.0" cy="742.8" r="1.5" fill="#cfcfd2"/>
<circle cx="810.0" cy="732.9" r="1.5" fill="#cfcfd2"/>
<circle cx="892.0" cy="724.3" r="1.5" fill="#cfcfd2"/>
<circle cx="974.0" cy="717.1" r="1.5" fill="#cfcfd2"/>
<circle cx="1056.0" cy="711.1" r="1.5" fill="#cfcfd2"/>
<circle cx="1138.0" cy="711.1" r="1.5" fill="#cfcfd2"/>
<circle cx="1220.0" cy="711.1" r="1.5" fill="#cfcfd2"/>
<circle cx="1302.0" cy="711.1" r="1.5" fill="#cfcfd2"/>
<circle cx="1384.0" cy="711.1" r="1.5" fill="#cfcfd2"/>
<circle cx="1466.0" cy="711.1" r="1.5" fill="#cfcfd2"/>
<circle cx="1548.0" cy="711.1" r="1.5" fill="#cfcfd2"/>
<circle cx="1630.0" cy="711.1" r="1.5" fill="#cfcfd2"/>
<polyline points="482.0,827.3 564.0,773.2 646.0,749.4 728.0,734.9 810.0,725.0 892.0,715.1 974.0,707.8 1056.0,702.5 1138.0,702.5 1220.0,702.5 1302.0,702.5 1384.0,702.5 1466.0,702.5 1548.0,702.5 1630.0,702.5 1704.0,702.5" fill="none" stroke="#9ecf5a" stroke-opacity="0.6" stroke-width="3.3" stroke-linejoin="round"/>
<circle cx="564.0" cy="773.2" r="1.5" fill="#a8cf7c"/>
<circle cx="646.0" cy="749.4" r="1.5" fill="#a8cf7c"/>
<circle cx="728.0" cy="734.9" r="1.5" fill="#a8cf7c"/>
<circle cx="810.0" cy="725.0" r="1.5" fill="#a8cf7c"/>
<circle cx="892.0" cy="715.1" r="1.5" fill="#a8cf7c"/>
<circle cx="974.0" cy="707.8" r="1.5" fill="#a8cf7c"/>
<circle cx="1056.0" cy="702.5" r="1.5" fill="#a8cf7c"/>
<circle cx="1138.0" cy="702.5" r="1.5" fill="#a8cf7c"/>
<circle cx="1220.0" cy="702.5" r="1.5" fill="#a8cf7c"/>
<circle cx="1302.0" cy="702.5" r="1.5" fill="#a8cf7c"/>
<circle cx="1384.0" cy="702.5" r="1.5" fill="#a8cf7c"/>
<circle cx="1466.0" cy="702.5" r="1.5" fill="#a8cf7c"/>
<circle cx="1548.0" cy="702.5" r="1.5" fill="#a8cf7c"/>
<circle cx="1630.0" cy="702.5" r="1.5" fill="#a8cf7c"/>
<polyline points="482.0,824.6 564.0,760.0 646.0,738.2 728.0,723.7 810.0,713.1 892.0,703.2 974.0,695.9 1056.0,691.3 1138.0,691.3 1220.0,691.3 1302.0,691.3 1384.0,691.3 1466.0,691.3 1548.0,691.3 1630.0,691.3 1704.0,691.3" fill="none" stroke="#c84850" stroke-opacity="0.6" stroke-width="3.3" stroke-linejoin="round"/>
<circle cx="564.0" cy="760.0" r="1.5" fill="#cc6a72"/>
<circle cx="646.0" cy="738.2" r="1.5" fill="#cc6a72"/>
<circle cx="728.0" cy="723.7" r="1.5" fill="#cc6a72"/>
<circle cx="810.0" cy="713.1" r="1.5" fill="#cc6a72"/>
<circle cx="892.0" cy="703.2" r="1.5" fill="#cc6a72"/>
<circle cx="974.0" cy="695.9" r="1.5" fill="#cc6a72"/>
<circle cx="1056.0" cy="691.3" r="1.5" fill="#cc6a72"/>
<circle cx="1138.0" cy="691.3" r="1.5" fill="#cc6a72"/>
<circle cx="1220.0" cy="691.3" r="1.5" fill="#cc6a72"/>
<circle cx="1302.0" cy="691.3" r="1.5" fill="#cc6a72"/>
<circle cx="1384.0" cy="691.3" r="1.5" fill="#cc6a72"/>
<circle cx="1466.0" cy="691.3" r="1.5" fill="#cc6a72"/>
<circle cx="1548.0" cy="691.3" r="1.5" fill="#cc6a72"/>
<circle cx="1630.0" cy="691.3" r="1.5" fill="#cc6a72"/>
<polyline points="482.0,815.4 564.0,741.5 646.0,721.0 728.0,706.5 810.0,695.3 892.0,685.4 974.0,678.1 1056.0,672.8 1138.0,672.8 1220.0,672.8 1302.0,672.8 1384.0,672.8 1466.0,672.8 1548.0,672.8 1630.0,672.8 1704.0,672.8" fill="none" stroke="#f7cb64" stroke-opacity="0.6" stroke-width="3.3" stroke-linejoin="round"/>
<circle cx="564.0" cy="741.5" r="1.5" fill="#eecb78"/>
<circle cx="646.0" cy="721.0" r="1.5" fill="#eecb78"/>
<circle cx="728.0" cy="706.5" r="1.5" fill="#eecb78"/>
<circle cx="810.0" cy="695.3" r="1.5" fill="#eecb78"/>
<circle cx="892.0" cy="685.4" r="1.5" fill="#eecb78"/>
<circle cx="974.0" cy="678.1" r="1.5" fill="#eecb78"/>
<circle cx="1056.0" cy="672.8" r="1.5" fill="#eecb78"/>
<circle cx="1138.0" cy="672.8" r="1.5" fill="#eecb78"/>
<circle cx="1220.0" cy="672.8" r="1.5" fill="#eecb78"/>
<circle cx="1302.0" cy="672.8" r="1.5" fill="#eecb78"/>
<circle cx="1384.0" cy="672.8" r="1.5" fill="#eecb78"/>
<circle cx="1466.0" cy="672.8" r="1.5" fill="#eecb78"/>
<circle cx="1548.0" cy="672.8" r="1.5" fill="#eecb78"/>
<circle cx="1630.0" cy="672.8" r="1.5" fill="#eecb78"/>
<polyline points="482.0,782.4 564.0,707.2 646.0,686.7 728.0,672.2 810.0,661.6 892.0,652.4 974.0,645.1 1056.0,639.8 1138.0,639.8 1220.0,639.8 1302.0,639.8 1384.0,639.8 1466.0,639.8 1548.0,639.8 1630.0,639.8 1704.0,639.8" fill="none" stroke="#eb8e50" stroke-opacity="0.6" stroke-width="3.3" stroke-linejoin="round"/>
<circle cx="564.0" cy="707.2" r="1.5" fill="#e89a70"/>
<circle cx="646.0" cy="686.7" r="1.5" fill="#e89a70"/>
<circle cx="728.0" cy="672.2" r="1.5" fill="#e89a70"/>
<circle cx="810.0" cy="661.6" r="1.5" fill="#e89a70"/>
<circle cx="892.0" cy="652.4" r="1.5" fill="#e89a70"/>
<circle cx="974.0" cy="645.1" r="1.5" fill="#e89a70"/>
<circle cx="1056.0" cy="639.8" r="1.5" fill="#e89a70"/>
<circle cx="1138.0" cy="639.8" r="1.5" fill="#e89a70"/>
<circle cx="1220.0" cy="639.8" r="1.5" fill="#e89a70"/>
<circle cx="1302.0" cy="639.8" r="1.5" fill="#e89a70"/>
<circle cx="1384.0" cy="639.8" r="1.5" fill="#e89a70"/>
<circle cx="1466.0" cy="639.8" r="1.5" fill="#e89a70"/>
<circle cx="1548.0" cy="639.8" r="1.5" fill="#e89a70"/>
<circle cx="1630.0" cy="639.8" r="1.5" fill="#e89a70"/>
<rect x="480.6" y="630.6" width="1.8" height="199.0" fill="#111" />
<rect x="466" y="827.7" width="1238" height="1.8" fill="#111" />
<rect x="466" y="827.6" width="16" height="2" fill="#111" />
<text x="463.5" y="832.8000000000001" font-size="12.5" fill="#1a1a1a" text-anchor="end" font-weight="normal"  textLength="6.39" lengthAdjust="spacingAndGlyphs">0</text>
<rect x="466" y="794.6" width="16" height="2" fill="#111" />
<text x="463.5" y="799.8000000000001" font-size="12.5" fill="#1a1a1a" text-anchor="end" font-weight="normal"  textLength="15.99" lengthAdjust="spacingAndGlyphs">0.5</text>
<rect x="466" y="761.6" width="16" height="2" fill="#111" />
<text x="463.5" y="766.8000000000001" font-size="12.5" fill="#1a1a1a" text-anchor="end" font-weight="normal"  textLength="6.39" lengthAdjust="spacingAndGlyphs">1</text>
<rect x="466" y="728.6" width="16" height="2" fill="#111" />
<text x="463.5" y="733.8000000000001" font-size="12.5" fill="#1a1a1a" text-anchor="end" font-weight="normal"  textLength="15.99" lengthAdjust="spacingAndGlyphs">1.5</text>
<rect x="466" y="695.6" width="16" height="2" fill="#111" />
<text x="463.5" y="700.8000000000001" font-size="12.5" fill="#1a1a1a" text-anchor="end" font-weight="normal"  textLength="6.39" lengthAdjust="spacingAndGlyphs">2</text>
<rect x="466" y="662.6" width="16" height="2" fill="#111" />
<text x="463.5" y="667.8000000000001" font-size="12.5" fill="#1a1a1a" text-anchor="end" font-weight="normal"  textLength="15.99" lengthAdjust="spacingAndGlyphs">2.5</text>
<rect x="466" y="629.6" width="16" height="2" fill="#111" />
<text x="463.5" y="634.8000000000001" font-size="12.5" fill="#1a1a1a" text-anchor="end" font-weight="normal"  textLength="6.39" lengthAdjust="spacingAndGlyphs">3</text>
<rect x="481.2" y="828.6" width="1.8" height="4.2" fill="#111" />
<text transform="translate(478.7,836.3) rotate(90)" font-size="11" fill="#1a1a1a">1.0</text>
<rect x="522.2" y="828.6" width="1.8" height="4.2" fill="#111" />
<text transform="translate(519.7,836.3) rotate(90)" font-size="11" fill="#1a1a1a">6</text>
<rect x="563.2" y="828.6" width="1.8" height="4.2" fill="#111" />
<text transform="translate(560.7,836.3) rotate(90)" font-size="11" fill="#1a1a1a">11.0</text>
<rect x="604.2" y="828.6" width="1.8" height="4.2" fill="#111" />
<text transform="translate(601.7,836.3) rotate(90)" font-size="11" fill="#1a1a1a">16</text>
<rect x="645.2" y="828.6" width="1.8" height="4.2" fill="#111" />
<text transform="translate(642.7,836.3) rotate(90)" font-size="11" fill="#1a1a1a">21.0</text>
<rect x="686.2" y="828.6" width="1.8" height="4.2" fill="#111" />
<text transform="translate(683.7,836.3) rotate(90)" font-size="11" fill="#1a1a1a">26</text>
<rect x="727.2" y="828.6" width="1.8" height="4.2" fill="#111" />
<text transform="translate(724.7,836.3) rotate(90)" font-size="11" fill="#1a1a1a">31.0</text>
<rect x="768.2" y="828.6" width="1.8" height="4.2" fill="#111" />
<text transform="translate(765.7,836.3) rotate(90)" font-size="11" fill="#1a1a1a">36</text>
<rect x="809.2" y="828.6" width="1.8" height="4.2" fill="#111" />
<text transform="translate(806.7,836.3) rotate(90)" font-size="11" fill="#1a1a1a">41.0</text>
<rect x="850.2" y="828.6" width="1.8" height="4.2" fill="#111" />
<text transform="translate(847.7,836.3) rotate(90)" font-size="11" fill="#1a1a1a">46</text>
<rect x="891.2" y="828.6" width="1.8" height="4.2" fill="#111" />
<text transform="translate(888.7,836.3) rotate(90)" font-size="11" fill="#1a1a1a">51.0</text>
<rect x="932.2" y="828.6" width="1.8" height="4.2" fill="#111" />
<text transform="translate(929.7,836.3) rotate(90)" font-size="11" fill="#1a1a1a">56</text>
<rect x="973.2" y="828.6" width="1.8" height="4.2" fill="#111" />
<text transform="translate(970.7,836.3) rotate(90)" font-size="11" fill="#1a1a1a">61.0</text>
<rect x="1014.2" y="828.6" width="1.8" height="4.2" fill="#111" />
<text transform="translate(1011.7,836.3) rotate(90)" font-size="11" fill="#1a1a1a">66</text>
<rect x="1055.2" y="828.6" width="1.8" height="4.2" fill="#111" />
<text transform="translate(1052.7,836.3) rotate(90)" font-size="11" fill="#1a1a1a">71.0</text>
<rect x="1096.2" y="828.6" width="1.8" height="4.2" fill="#111" />
<text transform="translate(1093.7,836.3) rotate(90)" font-size="11" fill="#1a1a1a">76</text>
<rect x="1137.2" y="828.6" width="1.8" height="4.2" fill="#111" />
<text transform="translate(1134.7,836.3) rotate(90)" font-size="11" fill="#1a1a1a">81.0</text>
<rect x="1178.2" y="828.6" width="1.8" height="4.2" fill="#111" />
<text transform="translate(1175.7,836.3) rotate(90)" font-size="11" fill="#1a1a1a">86</text>
<rect x="1219.2" y="828.6" width="1.8" height="4.2" fill="#111" />
<text transform="translate(1216.7,836.3) rotate(90)" font-size="11" fill="#1a1a1a">91.0</text>
<rect x="1260.2" y="828.6" width="1.8" height="4.2" fill="#111" />
<text transform="translate(1257.7,836.3) rotate(90)" font-size="11" fill="#1a1a1a">96</text>
<rect x="1301.2" y="828.6" width="1.8" height="4.2" fill="#111" />
<text transform="translate(1298.7,836.3) rotate(90)" font-size="11" fill="#1a1a1a">101.0</text>
<rect x="1342.2" y="828.6" width="1.8" height="4.2" fill="#111" />
<text transform="translate(1339.7,836.3) rotate(90)" font-size="11" fill="#1a1a1a">106</text>
<rect x="1383.2" y="828.6" width="1.8" height="4.2" fill="#111" />
<text transform="translate(1380.7,836.3) rotate(90)" font-size="11" fill="#1a1a1a">111.0</text>
<rect x="1424.2" y="828.6" width="1.8" height="4.2" fill="#111" />
<text transform="translate(1421.7,836.3) rotate(90)" font-size="11" fill="#1a1a1a">116</text>
<rect x="1465.2" y="828.6" width="1.8" height="4.2" fill="#111" />
<text transform="translate(1462.7,836.3) rotate(90)" font-size="11" fill="#1a1a1a">121.0</text>
<rect x="1506.2" y="828.6" width="1.8" height="4.2" fill="#111" />
<text transform="translate(1503.7,836.3) rotate(90)" font-size="11" fill="#1a1a1a">126</text>
<rect x="1547.2" y="828.6" width="1.8" height="4.2" fill="#111" />
<text transform="translate(1544.7,836.3) rotate(90)" font-size="11" fill="#1a1a1a">131.0</text>
<rect x="1588.2" y="828.6" width="1.8" height="4.2" fill="#111" />
<text transform="translate(1585.7,836.3) rotate(90)" font-size="11" fill="#1a1a1a">136</text>
<rect x="1629.2" y="828.6" width="1.8" height="4.2" fill="#111" />
<text transform="translate(1626.7,836.3) rotate(90)" font-size="11" fill="#1a1a1a">141.0</text>
<rect x="1670.2" y="828.6" width="1.8" height="4.2" fill="#111" />
<text transform="translate(1667.7,836.3) rotate(90)" font-size="11" fill="#1a1a1a">146</text>
<rect x="1749.5" y="623.5" width="107" height="102" fill="#fff" stroke="#c6c6c6" stroke-width="1"/>
<rect x="1761" y="635.0" width="27.5" height="3.6" fill="#f3bb96" />
<text x="1795" y="642.1999999999999" font-size="14.8" fill="#2a2a2a" text-anchor="start" font-weight="normal"  textLength="40.14" lengthAdjust="spacingAndGlyphs">1+ (%)</text>
<rect x="1761" y="652.6" width="27.5" height="3.6" fill="#fae0a2" />
<text x="1795" y="659.8" font-size="14.8" fill="#2a2a2a" text-anchor="start" font-weight="normal"  textLength="40.14" lengthAdjust="spacingAndGlyphs">2+ (%)</text>
<rect x="1761" y="670.2" width="27.5" height="3.6" fill="#de9196" />
<text x="1795" y="677.4" font-size="14.8" fill="#2a2a2a" text-anchor="start" font-weight="normal"  textLength="40.14" lengthAdjust="spacingAndGlyphs">3+ (%)</text>
<rect x="1761" y="687.8" width="27.5" height="3.6" fill="#c5e29c" />
<text x="1795" y="694.9999999999999" font-size="14.8" fill="#2a2a2a" text-anchor="start" font-weight="normal"  textLength="40.14" lengthAdjust="spacingAndGlyphs">4+ (%)</text>
<rect x="1761" y="705.4" width="27.5" height="3.6" fill="#e3e3e5" />
<text x="1795" y="712.5999999999999" font-size="14.8" fill="#2a2a2a" text-anchor="start" font-weight="normal"  textLength="40.14" lengthAdjust="spacingAndGlyphs">5+ (%)</text>
<rect x="1" y="890" width="1904" height="1" fill="#e6e8ee" />
<rect x="1" y="890" width="1" height="28" fill="#eceef2" />
<rect x="1903.5" y="890" width="1" height="28" fill="#e6e8ee" />
<rect x="1" y="917" width="1904" height="1.5" fill="#8e8e8e" />
<text x="6.3" y="907.8" font-size="14" fill="#6e7890" text-anchor="start" font-weight="normal" letter-spacing="0.35">Work Manager</text>
<text x="12.6" y="939.2" font-size="13.7" fill="#666a72" text-anchor="start" font-weight="normal" >Press F1 for Help</text>
<rect x="1900" y="936" width="2" height="2" fill="#555" />
<rect x="1896" y="940" width="2" height="2" fill="#555" />
<rect x="1900" y="940" width="2" height="2" fill="#555" />
<rect x="1892" y="944" width="2" height="2" fill="#555" />
<rect x="1896" y="944" width="2" height="2" fill="#555" />
<rect x="1900" y="944" width="2" height="2" fill="#555" /></svg>
</body></html>
